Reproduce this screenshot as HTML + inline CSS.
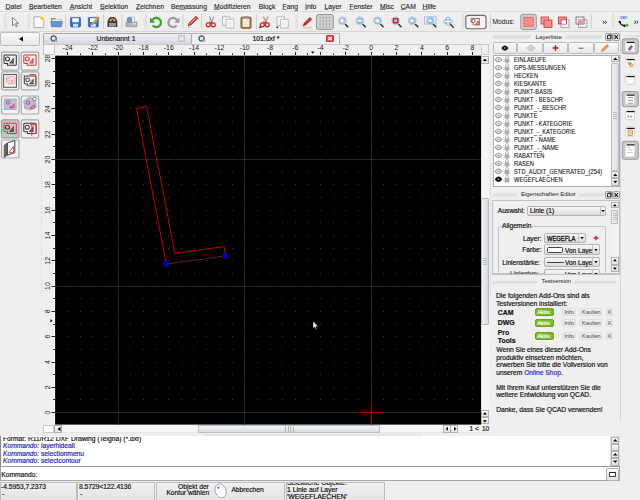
<!DOCTYPE html><html><head><meta charset="utf-8"><style>
*{margin:0;padding:0;box-sizing:border-box}
html,body{width:640px;height:500px;overflow:hidden;background:#efefef;font-family:"Liberation Sans",sans-serif;color:#111}
.a{position:absolute}
.t{position:absolute;white-space:nowrap;line-height:1;-webkit-text-stroke:0.18px currentColor}
#menu .t{font-size:6.8px;top:3.8px;color:#1a1a1a;-webkit-text-stroke:0.1px #1a1a1a}
#menu u{text-decoration-thickness:0.5px;text-underline-offset:0.4px;text-decoration-color:#888}
.btn{position:absolute;border:1px solid #bdbdbd;border-radius:2px;background:linear-gradient(#fbfbfb,#e6e6e6)}
.pr{position:absolute;border:1px solid #a0a0a0;border-radius:2px;background:#cdcdcd}
.sep{position:absolute;width:1px;background:#d0d0d0}
.grip{position:absolute;width:4px;background:repeating-linear-gradient(135deg,#c4c4c4 0 1px,transparent 1px 3px)}
</style></head><body>
<div id="menu" class="a" style="left:0;top:0;width:640px;height:12px;background:#efefef;border-bottom:1px solid #dadada">
<span class="t" style="left:5.6px"><u>D</u>atei</span>
<span class="t" style="left:29px"><u>B</u>earbeiten</span>
<span class="t" style="left:69.8px"><u>A</u>nsicht</span>
<span class="t" style="left:100px"><u>S</u>elektion</span>
<span class="t" style="left:136px"><u>Z</u>eichnen</span>
<span class="t" style="left:171px">Be<u>m</u>assung</span>
<span class="t" style="left:214px"><u>M</u>odifizieren</span>
<span class="t" style="left:258.7px">Blo<u>c</u>k</span>
<span class="t" style="left:282.5px"><u>F</u>ang</span>
<span class="t" style="left:305px"><u>I</u>nfo</span>
<span class="t" style="left:324.5px"><u>L</u>ayer</span>
<span class="t" style="left:349.5px"><u>F</u>enster</span>
<span class="t" style="left:380px"><u>M</u>isc</span>
<span class="t" style="left:400.7px"><u>C</u>AM</span>
<span class="t" style="left:422.5px"><u>H</u>ilfe</span>
</div>
<div id="tb" class="a" style="left:0;top:12px;width:640px;height:19.5px;background:linear-gradient(#f0f0f0,#ececec);border-bottom:1px solid #d6d6d6"></div>
<svg class="a" style="left:0;top:0" width="640" height="32"><g stroke="#c8c8c8" stroke-width="0.8"><path d="M4 16.4l2.6 -2.8"/><path d="M4 18.9l2.6 -2.8"/><path d="M4 21.4l2.6 -2.8"/><path d="M4 23.9l2.6 -2.8"/><path d="M4 26.4l2.6 -2.8"/><path d="M4 28.9l2.6 -2.8"/></g><g stroke="#c8c8c8" stroke-width="0.8"><path d="M27.3 16.4l2.6 -2.8"/><path d="M27.3 18.9l2.6 -2.8"/><path d="M27.3 21.4l2.6 -2.8"/><path d="M27.3 23.9l2.6 -2.8"/><path d="M27.3 26.4l2.6 -2.8"/><path d="M27.3 28.9l2.6 -2.8"/></g><g stroke="#c8c8c8" stroke-width="0.8"><path d="M144.5 16.4l2.6 -2.8"/><path d="M144.5 18.9l2.6 -2.8"/><path d="M144.5 21.4l2.6 -2.8"/><path d="M144.5 23.9l2.6 -2.8"/><path d="M144.5 26.4l2.6 -2.8"/><path d="M144.5 28.9l2.6 -2.8"/></g><g stroke="#c8c8c8" stroke-width="0.8"><path d="M295.5 16.4l2.6 -2.8"/><path d="M295.5 18.9l2.6 -2.8"/><path d="M295.5 21.4l2.6 -2.8"/><path d="M295.5 23.9l2.6 -2.8"/><path d="M295.5 26.4l2.6 -2.8"/><path d="M295.5 28.9l2.6 -2.8"/></g><g stroke="#c8c8c8" stroke-width="0.8"><path d="M462 16.4l2.6 -2.8"/><path d="M462 18.9l2.6 -2.8"/><path d="M462 21.4l2.6 -2.8"/><path d="M462 23.9l2.6 -2.8"/><path d="M462 26.4l2.6 -2.8"/><path d="M462 28.9l2.6 -2.8"/></g><g stroke="#c8c8c8" stroke-width="0.8"><path d="M611.8 16.4l2.6 -2.8"/><path d="M611.8 18.9l2.6 -2.8"/><path d="M611.8 21.4l2.6 -2.8"/><path d="M611.8 23.9l2.6 -2.8"/><path d="M611.8 26.4l2.6 -2.8"/><path d="M611.8 28.9l2.6 -2.8"/></g><rect x="65.3" y="14" width="0.9" height="15" fill="#cdcdcd"/><rect x="103" y="14" width="0.9" height="15" fill="#cdcdcd"/><rect x="121.6" y="14" width="0.9" height="15" fill="#cdcdcd"/><rect x="182.5" y="14" width="0.9" height="15" fill="#cdcdcd"/><rect x="201.3" y="14" width="0.9" height="15" fill="#cdcdcd"/><rect x="256" y="14" width="0.9" height="15" fill="#cdcdcd"/><rect x="490" y="14" width="0.9" height="15" fill="#cdcdcd"/><rect x="590.8" y="14" width="0.9" height="15" fill="#cdcdcd"/><path d="M12.5 17.5v8.2l2-1.8 1.6 3 1.2-.6-1.5-3h2.7z" fill="#fff" stroke="#555" stroke-width="0.7"/><path d="M34 16.8h7.5l2.2 2.2v8.6h-9.7z" fill="#fafafa" stroke="#9a9a9a" stroke-width="0.8"/><circle cx="42" cy="18.3" r="2" fill="#f6c20d" stroke="#fff" stroke-width="0.5"/><path d="M51 18h4l1 1.2h5.3v7.4h-10.3z" fill="#8e8e8e"/><path d="M52.2 19.5h8.4v2h-8.4z" fill="#f2f2f2"/><path d="M50.8 21.5h11.7l-1 5.3h-10z" fill="#6294d2" stroke="#3a6aa8" stroke-width="0.5"/><rect x="70.5" y="17.4" width="10" height="9.6" rx="1" fill="#2c6fd8" stroke="#1b4fa8" stroke-width="0.6"/><rect x="72.2" y="18.2" width="6.6" height="4" fill="#fff"/><rect x="73" y="23.8" width="5" height="3" fill="#d8e2f0"/><rect x="88.3" y="17.4" width="10" height="9.6" rx="1" fill="#2c6fd8" stroke="#1b4fa8" stroke-width="0.6"/><rect x="90" y="18.2" width="6.6" height="4" fill="#fff"/><rect x="90.8" y="23.8" width="5" height="3" fill="#d8e2f0"/><path d="M91.5 25l1-2.5 5.5-5.8 1.4 1.3-5.6 5.8z" fill="#f3b51c" stroke="#8a5a00" stroke-width="0.5"/><path d="M107.5 22.5c0-3.5 2-5.5 4.9-5.5s4.9 2 4.9 5.5v4.5h-9.8z" fill="#3a3a3a"/><path d="M109.5 20.5l3-2 3 2" stroke="#e8922a" stroke-width="1.2" fill="none"/><rect x="109" y="23" width="6.8" height="3.6" fill="#9a9a9a"/><rect x="110" y="19.8" width="1.5" height="1.5" fill="#f0b040"/><rect x="113.5" y="19.8" width="1.5" height="1.5" fill="#f0b040"/><path d="M126 22h11v4.8h-11z" fill="#b5b5b5" stroke="#8a8a8a" stroke-width="0.6"/><path d="M128 17h6.5v5h-6.5z" fill="#eee" stroke="#999" stroke-width="0.5"/><circle cx="129.5" cy="19.8" r="2.3" fill="#6a9be0" stroke="#2f5f9f" stroke-width="0.6"/><rect x="133" y="23.2" width="3" height="1.2" fill="#e6e6e6"/><path d="M152.6 19.8a4.6 4.6 0 1 1 .2 5.6" fill="none" stroke="#3aa02a" stroke-width="2.2"/><path d="M150 17.5v5.2h5.2z" fill="#3aa02a"/><path d="M176.8 19.8a4.6 4.6 0 1 0 -.2 5.6" fill="none" stroke="#9a9a9a" stroke-width="2.2"/><path d="M179.4 17.5v5.2h-5.2z" fill="#9a9a9a"/><path d="M188 26l1.2-3.2 6.8-6.6 2 2-6.8 6.6z" fill="#d42a2a" stroke="#9a1010" stroke-width="0.5"/><path d="M189.6 24l6.2-6" stroke="#fff" stroke-width="0.8"/><path d="M188 27.5h3" stroke="#bbb" stroke-width="0.8"/><path d="M209.5 16.5l2.5 6.5M214.0 16.5l-3 6.5" stroke="#9a9a9a" stroke-width="1.1"/><circle cx="208.3" cy="24.8" r="2" fill="none" stroke="#d42020" stroke-width="1.2"/><circle cx="213.3" cy="24.8" r="2" fill="none" stroke="#d42020" stroke-width="1.2"/><path d="M209.7 23.5l3-2M211.7 23.5l-2.6-2" stroke="#d42020" stroke-width="1"/><path d="M263.5 16.5l2.5 6.5M268.0 16.5l-3 6.5" stroke="#9a9a9a" stroke-width="1.1"/><circle cx="262.3" cy="24.8" r="2" fill="none" stroke="#d42020" stroke-width="1.2"/><circle cx="267.3" cy="24.8" r="2" fill="none" stroke="#d42020" stroke-width="1.2"/><path d="M263.7 23.5l3-2M265.7 23.5l-2.6-2" stroke="#d42020" stroke-width="1"/><rect x="259.2" y="26.5" width="1.6" height="1.6" fill="#222"/><rect x="222.5" y="16.8" width="7.5" height="8.5" fill="#f6f6f6" stroke="#a8a8a8" stroke-width="0.7"/><path d="M226.0 19.3h7.8v8.6h-7.8z" fill="#fbfbfb" stroke="#a8a8a8" stroke-width="0.7"/><path d="M227.5 22h4.5M227.5 23.6h4.5M227.5 25.2h4.5" stroke="#d8d8d8" stroke-width="0.6"/><rect x="277" y="16.8" width="7.5" height="8.5" fill="#f6f6f6" stroke="#a8a8a8" stroke-width="0.7"/><path d="M280.5 19.3h7.8v8.6h-7.8z" fill="#fbfbfb" stroke="#a8a8a8" stroke-width="0.7"/><path d="M282 22h4.5M282 23.6h4.5M282 25.2h4.5" stroke="#d8d8d8" stroke-width="0.6"/><rect x="276.5" y="26.5" width="1.6" height="1.6" fill="#222"/><rect x="241" y="17.2" width="10" height="11" rx="1" fill="#b67a3a" stroke="#8a5520"/><rect x="242.6" y="18.8" width="6.8" height="8" fill="#f4f4f4"/><rect x="243.8" y="16" width="4.4" height="2.4" rx="0.8" fill="#9a9a9a"/><path d="M243.6 21h4.8M243.6 22.8h4.8M243.6 24.6h4.8" stroke="#ccc" stroke-width="0.6"/><path d="M303 26l1.2-3 5.8-5.6 1.8 1.8-5.8 5.6z" fill="#d42a2a" stroke="#9a1010" stroke-width="0.5"/><path d="M302.5 27.8h8.8" stroke="#f2a0a0" stroke-width="1"/><rect x="316.5" y="14.5" width="16.8" height="15" rx="2" fill="#cfcfcf" stroke="#8e8e8e" stroke-width="0.9"/><g fill="#8a8a8a"><rect x="319.6" y="17.3" width="1.1" height="1.1"/><rect x="319.6" y="20.4" width="1.1" height="1.1"/><rect x="319.6" y="23.5" width="1.1" height="1.1"/><rect x="319.6" y="26.6" width="1.1" height="1.1"/><rect x="322.7" y="17.3" width="1.1" height="1.1"/><rect x="322.7" y="20.4" width="1.1" height="1.1"/><rect x="322.7" y="23.5" width="1.1" height="1.1"/><rect x="322.7" y="26.6" width="1.1" height="1.1"/><rect x="325.8" y="17.3" width="1.1" height="1.1"/><rect x="325.8" y="20.4" width="1.1" height="1.1"/><rect x="325.8" y="23.5" width="1.1" height="1.1"/><rect x="325.8" y="26.6" width="1.1" height="1.1"/><rect x="328.9" y="17.3" width="1.1" height="1.1"/><rect x="328.9" y="20.4" width="1.1" height="1.1"/><rect x="328.9" y="23.5" width="1.1" height="1.1"/><rect x="328.9" y="26.6" width="1.1" height="1.1"/></g><path d="M344.5 23.5l3.3 3.3" stroke="#333" stroke-width="1.6" stroke-linecap="round"/><circle cx="342.3" cy="20.8" r="4" fill="#8fb6e6" stroke="#c8d3df" stroke-width="1"/><circle cx="341.7" cy="20.2" r="2" fill="#b7d2f3"/><path d="M339.9 20.8h4.8M342.3 18.4v4.8" stroke="#fff" stroke-width="1.3"/><path d="M362.0 23.5l3.3 3.3" stroke="#333" stroke-width="1.6" stroke-linecap="round"/><circle cx="359.8" cy="20.8" r="4" fill="#8fb6e6" stroke="#c8d3df" stroke-width="1"/><circle cx="359.2" cy="20.2" r="2" fill="#b7d2f3"/><path d="M357.4 20.8h4.8" stroke="#fff" stroke-width="1.3"/><path d="M379.8 23.5l3.3 3.3" stroke="#333" stroke-width="1.6" stroke-linecap="round"/><circle cx="377.6" cy="20.8" r="4" fill="#8fb6e6" stroke="#c8d3df" stroke-width="1"/><circle cx="377.0" cy="20.2" r="2" fill="#b7d2f3"/><path d="M375.5 20.8h4.2M377.6 18.7v4.2" stroke="#fff" stroke-width="1.6"/><path d="M397.8 23.5l3.3 3.3" stroke="#333" stroke-width="1.6" stroke-linecap="round"/><circle cx="395.6" cy="20.8" r="4" fill="#8fb6e6" stroke="#c8d3df" stroke-width="1"/><circle cx="395.0" cy="20.2" r="2" fill="#b7d2f3"/><rect x="393.5" y="18.9" width="4.2" height="3.8" fill="none" stroke="#d41e1e" stroke-width="1.4"/><path d="M414.5 23.5l3.3 3.3" stroke="#333" stroke-width="1.6" stroke-linecap="round"/><circle cx="412.3" cy="20.8" r="4" fill="#8fb6e6" stroke="#c8d3df" stroke-width="1"/><circle cx="411.7" cy="20.2" r="2" fill="#b7d2f3"/><path d="M410.5 20.8h3.8M410.5 20.8l1.8-1.6M410.5 20.8l1.8 1.6" stroke="#fff" stroke-width="1.2"/><rect x="424.5" y="16.8" width="11.5" height="7.2" fill="#f6f8fb" stroke="#9ab4d6" stroke-width="0.8"/><path d="M432.5 23.5l3.3 3.3" stroke="#333" stroke-width="1.6" stroke-linecap="round"/><circle cx="430.3" cy="20.8" r="4" fill="#8fb6e6" stroke="#c8d3df" stroke-width="1"/><circle cx="429.7" cy="20.2" r="2" fill="#b7d2f3"/><path d="M428.2 20.8h4.2" stroke="#fff" stroke-width="1.2"/><path d="M448 16.2l5.2 5.2-5.2 5.2-5.2-5.2z" fill="#8fb6e6" stroke="#c6d4e6" stroke-width="0.6"/><path d="M448 17.5v7.8M444.1 21.4h7.8" stroke="#fff" stroke-width="1"/><path d="M450.6 24.5l2.6 2.8" stroke="#333" stroke-width="1.4" stroke-linecap="round"/><rect x="465.8" y="15.4" width="20.2" height="13.3" rx="2.5" fill="#f4f4f4" stroke="#6a6a6a" stroke-width="1.1"/><path d="M471 18.5h8.5v6.5h-6.5v-2.8h-2z" fill="none" stroke="#e23030" stroke-width="0.8"/><circle cx="473.4" cy="21" r="1.6" fill="#fff" stroke="#333" stroke-width="0.7"/><path d="M475.8 24.3l2.4-3.2v3.2z" fill="none" stroke="#333" stroke-width="0.7"/><text x="492.5" y="23.6" font-size="6.7" fill="#111" font-family="Liberation Sans">Modus:</text><rect x="520.8" y="14.3" width="15.5" height="15.2" rx="2" fill="#cdcdcd" stroke="#8e8e8e" stroke-width="0.9"/><rect x="523.8" y="17.4" width="9.5" height="9" fill="#ff8a8a" stroke="#c02020" stroke-width="0.7" stroke-dasharray="0.9 0.7"/><rect x="541" y="17" width="7.5" height="7" fill="#ff9a9a" stroke="#c02020" stroke-width="0.7"/><rect x="544" y="20" width="8" height="7.5" fill="#ff8a8a" stroke="#c02020" stroke-width="0.7"/><rect x="558.5" y="17" width="8" height="7" fill="#ff8a8a" stroke="#c02020" stroke-width="0.7"/><rect x="561" y="19.8" width="8" height="7.7" fill="none" stroke="#333" stroke-width="0.7" stroke-dasharray="0.9 0.8"/><rect x="561.6" y="20.4" width="4.4" height="3.5" fill="#fff"/><rect x="576" y="17" width="8" height="7" fill="none" stroke="#555" stroke-width="0.7"/><rect x="578.5" y="19.8" width="8.5" height="7.7" fill="none" stroke="#333" stroke-width="0.7" stroke-dasharray="0.9 0.8"/><rect x="578.9" y="20.2" width="4.7" height="3.9" fill="#ff8a8a"/><path d="M603 21l1.5 1.3-1.5 1.3M605.2 21l1.5 1.3-1.5 1.3" fill="none" stroke="#111" stroke-width="0.9"/><path d="M634.4 21l1.5 1.3-1.5 1.3M636.6 21l1.5 1.3-1.5 1.3" fill="none" stroke="#111" stroke-width="0.9"/><text x="620.3" y="19.3" font-size="3.3" fill="#4a6ae8" font-family="Liberation Sans" font-weight="bold">DBX</text><path d="M619.8 21.9l1.4 2.6 3.2 1.3" fill="none" stroke="#111" stroke-width="1.3"/><circle cx="619.8" cy="21.9" r="1.2" fill="#111"/><circle cx="624.5" cy="25.8" r="1.2" fill="#111"/><path d="M625.3 25.1h3.2M627 23.8v2.8" stroke="#22a022" stroke-width="1.1"/></svg>
<svg class="a" style="left:0;top:0" width="640" height="500"><rect x="55" y="55.4" width="426" height="369.20000000000005" fill="#000"/><line x1="118.5" y1="55.4" x2="118.5" y2="424.6" stroke="#242424" stroke-width="1"/><line x1="244.5" y1="55.4" x2="244.5" y2="424.6" stroke="#242424" stroke-width="1"/><line x1="371.5" y1="55.4" x2="371.5" y2="424.6" stroke="#242424" stroke-width="1"/><line x1="55" y1="412.5" x2="481" y2="412.5" stroke="#242424" stroke-width="1"/><line x1="55" y1="286.5" x2="481" y2="286.5" stroke="#242424" stroke-width="1"/><line x1="55" y1="159.5" x2="481" y2="159.5" stroke="#242424" stroke-width="1"/><path d="M67 412h1v1h-1zM67 399h1v1h-1zM67 387h1v1h-1zM67 374h1v1h-1zM67 362h1v1h-1zM67 349h1v1h-1zM67 336h1v1h-1zM67 324h1v1h-1zM67 311h1v1h-1zM67 298h1v1h-1zM67 286h1v1h-1zM67 273h1v1h-1zM67 260h1v1h-1zM67 248h1v1h-1zM67 235h1v1h-1zM67 222h1v1h-1zM67 210h1v1h-1zM67 197h1v1h-1zM67 184h1v1h-1zM67 172h1v1h-1zM67 159h1v1h-1zM67 146h1v1h-1zM67 134h1v1h-1zM67 121h1v1h-1zM67 108h1v1h-1zM67 96h1v1h-1zM67 83h1v1h-1zM67 71h1v1h-1zM67 58h1v1h-1zM80 412h1v1h-1zM80 399h1v1h-1zM80 387h1v1h-1zM80 374h1v1h-1zM80 362h1v1h-1zM80 349h1v1h-1zM80 336h1v1h-1zM80 324h1v1h-1zM80 311h1v1h-1zM80 298h1v1h-1zM80 286h1v1h-1zM80 273h1v1h-1zM80 260h1v1h-1zM80 248h1v1h-1zM80 235h1v1h-1zM80 222h1v1h-1zM80 210h1v1h-1zM80 197h1v1h-1zM80 184h1v1h-1zM80 172h1v1h-1zM80 159h1v1h-1zM80 146h1v1h-1zM80 134h1v1h-1zM80 121h1v1h-1zM80 108h1v1h-1zM80 96h1v1h-1zM80 83h1v1h-1zM80 71h1v1h-1zM80 58h1v1h-1zM92 412h1v1h-1zM92 399h1v1h-1zM92 387h1v1h-1zM92 374h1v1h-1zM92 362h1v1h-1zM92 349h1v1h-1zM92 336h1v1h-1zM92 324h1v1h-1zM92 311h1v1h-1zM92 298h1v1h-1zM92 286h1v1h-1zM92 273h1v1h-1zM92 260h1v1h-1zM92 248h1v1h-1zM92 235h1v1h-1zM92 222h1v1h-1zM92 210h1v1h-1zM92 197h1v1h-1zM92 184h1v1h-1zM92 172h1v1h-1zM92 159h1v1h-1zM92 146h1v1h-1zM92 134h1v1h-1zM92 121h1v1h-1zM92 108h1v1h-1zM92 96h1v1h-1zM92 83h1v1h-1zM92 71h1v1h-1zM92 58h1v1h-1zM105 412h1v1h-1zM105 399h1v1h-1zM105 387h1v1h-1zM105 374h1v1h-1zM105 362h1v1h-1zM105 349h1v1h-1zM105 336h1v1h-1zM105 324h1v1h-1zM105 311h1v1h-1zM105 298h1v1h-1zM105 286h1v1h-1zM105 273h1v1h-1zM105 260h1v1h-1zM105 248h1v1h-1zM105 235h1v1h-1zM105 222h1v1h-1zM105 210h1v1h-1zM105 197h1v1h-1zM105 184h1v1h-1zM105 172h1v1h-1zM105 159h1v1h-1zM105 146h1v1h-1zM105 134h1v1h-1zM105 121h1v1h-1zM105 108h1v1h-1zM105 96h1v1h-1zM105 83h1v1h-1zM105 71h1v1h-1zM105 58h1v1h-1zM118 412h1v1h-1zM118 399h1v1h-1zM118 387h1v1h-1zM118 374h1v1h-1zM118 362h1v1h-1zM118 349h1v1h-1zM118 336h1v1h-1zM118 324h1v1h-1zM118 311h1v1h-1zM118 298h1v1h-1zM118 286h1v1h-1zM118 273h1v1h-1zM118 260h1v1h-1zM118 248h1v1h-1zM118 235h1v1h-1zM118 222h1v1h-1zM118 210h1v1h-1zM118 197h1v1h-1zM118 184h1v1h-1zM118 172h1v1h-1zM118 159h1v1h-1zM118 146h1v1h-1zM118 134h1v1h-1zM118 121h1v1h-1zM118 108h1v1h-1zM118 96h1v1h-1zM118 83h1v1h-1zM118 71h1v1h-1zM118 58h1v1h-1zM130 412h1v1h-1zM130 399h1v1h-1zM130 387h1v1h-1zM130 374h1v1h-1zM130 362h1v1h-1zM130 349h1v1h-1zM130 336h1v1h-1zM130 324h1v1h-1zM130 311h1v1h-1zM130 298h1v1h-1zM130 286h1v1h-1zM130 273h1v1h-1zM130 260h1v1h-1zM130 248h1v1h-1zM130 235h1v1h-1zM130 222h1v1h-1zM130 210h1v1h-1zM130 197h1v1h-1zM130 184h1v1h-1zM130 172h1v1h-1zM130 159h1v1h-1zM130 146h1v1h-1zM130 134h1v1h-1zM130 121h1v1h-1zM130 108h1v1h-1zM130 96h1v1h-1zM130 83h1v1h-1zM130 71h1v1h-1zM130 58h1v1h-1zM143 412h1v1h-1zM143 399h1v1h-1zM143 387h1v1h-1zM143 374h1v1h-1zM143 362h1v1h-1zM143 349h1v1h-1zM143 336h1v1h-1zM143 324h1v1h-1zM143 311h1v1h-1zM143 298h1v1h-1zM143 286h1v1h-1zM143 273h1v1h-1zM143 260h1v1h-1zM143 248h1v1h-1zM143 235h1v1h-1zM143 222h1v1h-1zM143 210h1v1h-1zM143 197h1v1h-1zM143 184h1v1h-1zM143 172h1v1h-1zM143 159h1v1h-1zM143 146h1v1h-1zM143 134h1v1h-1zM143 121h1v1h-1zM143 108h1v1h-1zM143 96h1v1h-1zM143 83h1v1h-1zM143 71h1v1h-1zM143 58h1v1h-1zM156 412h1v1h-1zM156 399h1v1h-1zM156 387h1v1h-1zM156 374h1v1h-1zM156 362h1v1h-1zM156 349h1v1h-1zM156 336h1v1h-1zM156 324h1v1h-1zM156 311h1v1h-1zM156 298h1v1h-1zM156 286h1v1h-1zM156 273h1v1h-1zM156 260h1v1h-1zM156 248h1v1h-1zM156 235h1v1h-1zM156 222h1v1h-1zM156 210h1v1h-1zM156 197h1v1h-1zM156 184h1v1h-1zM156 172h1v1h-1zM156 159h1v1h-1zM156 146h1v1h-1zM156 134h1v1h-1zM156 121h1v1h-1zM156 108h1v1h-1zM156 96h1v1h-1zM156 83h1v1h-1zM156 71h1v1h-1zM156 58h1v1h-1zM168 412h1v1h-1zM168 399h1v1h-1zM168 387h1v1h-1zM168 374h1v1h-1zM168 362h1v1h-1zM168 349h1v1h-1zM168 336h1v1h-1zM168 324h1v1h-1zM168 311h1v1h-1zM168 298h1v1h-1zM168 286h1v1h-1zM168 273h1v1h-1zM168 260h1v1h-1zM168 248h1v1h-1zM168 235h1v1h-1zM168 222h1v1h-1zM168 210h1v1h-1zM168 197h1v1h-1zM168 184h1v1h-1zM168 172h1v1h-1zM168 159h1v1h-1zM168 146h1v1h-1zM168 134h1v1h-1zM168 121h1v1h-1zM168 108h1v1h-1zM168 96h1v1h-1zM168 83h1v1h-1zM168 71h1v1h-1zM168 58h1v1h-1zM181 412h1v1h-1zM181 399h1v1h-1zM181 387h1v1h-1zM181 374h1v1h-1zM181 362h1v1h-1zM181 349h1v1h-1zM181 336h1v1h-1zM181 324h1v1h-1zM181 311h1v1h-1zM181 298h1v1h-1zM181 286h1v1h-1zM181 273h1v1h-1zM181 260h1v1h-1zM181 248h1v1h-1zM181 235h1v1h-1zM181 222h1v1h-1zM181 210h1v1h-1zM181 197h1v1h-1zM181 184h1v1h-1zM181 172h1v1h-1zM181 159h1v1h-1zM181 146h1v1h-1zM181 134h1v1h-1zM181 121h1v1h-1zM181 108h1v1h-1zM181 96h1v1h-1zM181 83h1v1h-1zM181 71h1v1h-1zM181 58h1v1h-1zM194 412h1v1h-1zM194 399h1v1h-1zM194 387h1v1h-1zM194 374h1v1h-1zM194 362h1v1h-1zM194 349h1v1h-1zM194 336h1v1h-1zM194 324h1v1h-1zM194 311h1v1h-1zM194 298h1v1h-1zM194 286h1v1h-1zM194 273h1v1h-1zM194 260h1v1h-1zM194 248h1v1h-1zM194 235h1v1h-1zM194 222h1v1h-1zM194 210h1v1h-1zM194 197h1v1h-1zM194 184h1v1h-1zM194 172h1v1h-1zM194 159h1v1h-1zM194 146h1v1h-1zM194 134h1v1h-1zM194 121h1v1h-1zM194 108h1v1h-1zM194 96h1v1h-1zM194 83h1v1h-1zM194 71h1v1h-1zM194 58h1v1h-1zM206 412h1v1h-1zM206 399h1v1h-1zM206 387h1v1h-1zM206 374h1v1h-1zM206 362h1v1h-1zM206 349h1v1h-1zM206 336h1v1h-1zM206 324h1v1h-1zM206 311h1v1h-1zM206 298h1v1h-1zM206 286h1v1h-1zM206 273h1v1h-1zM206 260h1v1h-1zM206 248h1v1h-1zM206 235h1v1h-1zM206 222h1v1h-1zM206 210h1v1h-1zM206 197h1v1h-1zM206 184h1v1h-1zM206 172h1v1h-1zM206 159h1v1h-1zM206 146h1v1h-1zM206 134h1v1h-1zM206 121h1v1h-1zM206 108h1v1h-1zM206 96h1v1h-1zM206 83h1v1h-1zM206 71h1v1h-1zM206 58h1v1h-1zM219 412h1v1h-1zM219 399h1v1h-1zM219 387h1v1h-1zM219 374h1v1h-1zM219 362h1v1h-1zM219 349h1v1h-1zM219 336h1v1h-1zM219 324h1v1h-1zM219 311h1v1h-1zM219 298h1v1h-1zM219 286h1v1h-1zM219 273h1v1h-1zM219 260h1v1h-1zM219 248h1v1h-1zM219 235h1v1h-1zM219 222h1v1h-1zM219 210h1v1h-1zM219 197h1v1h-1zM219 184h1v1h-1zM219 172h1v1h-1zM219 159h1v1h-1zM219 146h1v1h-1zM219 134h1v1h-1zM219 121h1v1h-1zM219 108h1v1h-1zM219 96h1v1h-1zM219 83h1v1h-1zM219 71h1v1h-1zM219 58h1v1h-1zM232 412h1v1h-1zM232 399h1v1h-1zM232 387h1v1h-1zM232 374h1v1h-1zM232 362h1v1h-1zM232 349h1v1h-1zM232 336h1v1h-1zM232 324h1v1h-1zM232 311h1v1h-1zM232 298h1v1h-1zM232 286h1v1h-1zM232 273h1v1h-1zM232 260h1v1h-1zM232 248h1v1h-1zM232 235h1v1h-1zM232 222h1v1h-1zM232 210h1v1h-1zM232 197h1v1h-1zM232 184h1v1h-1zM232 172h1v1h-1zM232 159h1v1h-1zM232 146h1v1h-1zM232 134h1v1h-1zM232 121h1v1h-1zM232 108h1v1h-1zM232 96h1v1h-1zM232 83h1v1h-1zM232 71h1v1h-1zM232 58h1v1h-1zM244 412h1v1h-1zM244 399h1v1h-1zM244 387h1v1h-1zM244 374h1v1h-1zM244 362h1v1h-1zM244 349h1v1h-1zM244 336h1v1h-1zM244 324h1v1h-1zM244 311h1v1h-1zM244 298h1v1h-1zM244 286h1v1h-1zM244 273h1v1h-1zM244 260h1v1h-1zM244 248h1v1h-1zM244 235h1v1h-1zM244 222h1v1h-1zM244 210h1v1h-1zM244 197h1v1h-1zM244 184h1v1h-1zM244 172h1v1h-1zM244 159h1v1h-1zM244 146h1v1h-1zM244 134h1v1h-1zM244 121h1v1h-1zM244 108h1v1h-1zM244 96h1v1h-1zM244 83h1v1h-1zM244 71h1v1h-1zM244 58h1v1h-1zM257 412h1v1h-1zM257 399h1v1h-1zM257 387h1v1h-1zM257 374h1v1h-1zM257 362h1v1h-1zM257 349h1v1h-1zM257 336h1v1h-1zM257 324h1v1h-1zM257 311h1v1h-1zM257 298h1v1h-1zM257 286h1v1h-1zM257 273h1v1h-1zM257 260h1v1h-1zM257 248h1v1h-1zM257 235h1v1h-1zM257 222h1v1h-1zM257 210h1v1h-1zM257 197h1v1h-1zM257 184h1v1h-1zM257 172h1v1h-1zM257 159h1v1h-1zM257 146h1v1h-1zM257 134h1v1h-1zM257 121h1v1h-1zM257 108h1v1h-1zM257 96h1v1h-1zM257 83h1v1h-1zM257 71h1v1h-1zM257 58h1v1h-1zM270 412h1v1h-1zM270 399h1v1h-1zM270 387h1v1h-1zM270 374h1v1h-1zM270 362h1v1h-1zM270 349h1v1h-1zM270 336h1v1h-1zM270 324h1v1h-1zM270 311h1v1h-1zM270 298h1v1h-1zM270 286h1v1h-1zM270 273h1v1h-1zM270 260h1v1h-1zM270 248h1v1h-1zM270 235h1v1h-1zM270 222h1v1h-1zM270 210h1v1h-1zM270 197h1v1h-1zM270 184h1v1h-1zM270 172h1v1h-1zM270 159h1v1h-1zM270 146h1v1h-1zM270 134h1v1h-1zM270 121h1v1h-1zM270 108h1v1h-1zM270 96h1v1h-1zM270 83h1v1h-1zM270 71h1v1h-1zM270 58h1v1h-1zM282 412h1v1h-1zM282 399h1v1h-1zM282 387h1v1h-1zM282 374h1v1h-1zM282 362h1v1h-1zM282 349h1v1h-1zM282 336h1v1h-1zM282 324h1v1h-1zM282 311h1v1h-1zM282 298h1v1h-1zM282 286h1v1h-1zM282 273h1v1h-1zM282 260h1v1h-1zM282 248h1v1h-1zM282 235h1v1h-1zM282 222h1v1h-1zM282 210h1v1h-1zM282 197h1v1h-1zM282 184h1v1h-1zM282 172h1v1h-1zM282 159h1v1h-1zM282 146h1v1h-1zM282 134h1v1h-1zM282 121h1v1h-1zM282 108h1v1h-1zM282 96h1v1h-1zM282 83h1v1h-1zM282 71h1v1h-1zM282 58h1v1h-1zM295 412h1v1h-1zM295 399h1v1h-1zM295 387h1v1h-1zM295 374h1v1h-1zM295 362h1v1h-1zM295 349h1v1h-1zM295 336h1v1h-1zM295 324h1v1h-1zM295 311h1v1h-1zM295 298h1v1h-1zM295 286h1v1h-1zM295 273h1v1h-1zM295 260h1v1h-1zM295 248h1v1h-1zM295 235h1v1h-1zM295 222h1v1h-1zM295 210h1v1h-1zM295 197h1v1h-1zM295 184h1v1h-1zM295 172h1v1h-1zM295 159h1v1h-1zM295 146h1v1h-1zM295 134h1v1h-1zM295 121h1v1h-1zM295 108h1v1h-1zM295 96h1v1h-1zM295 83h1v1h-1zM295 71h1v1h-1zM295 58h1v1h-1zM307 412h1v1h-1zM307 399h1v1h-1zM307 387h1v1h-1zM307 374h1v1h-1zM307 362h1v1h-1zM307 349h1v1h-1zM307 336h1v1h-1zM307 324h1v1h-1zM307 311h1v1h-1zM307 298h1v1h-1zM307 286h1v1h-1zM307 273h1v1h-1zM307 260h1v1h-1zM307 248h1v1h-1zM307 235h1v1h-1zM307 222h1v1h-1zM307 210h1v1h-1zM307 197h1v1h-1zM307 184h1v1h-1zM307 172h1v1h-1zM307 159h1v1h-1zM307 146h1v1h-1zM307 134h1v1h-1zM307 121h1v1h-1zM307 108h1v1h-1zM307 96h1v1h-1zM307 83h1v1h-1zM307 71h1v1h-1zM307 58h1v1h-1zM320 412h1v1h-1zM320 399h1v1h-1zM320 387h1v1h-1zM320 374h1v1h-1zM320 362h1v1h-1zM320 349h1v1h-1zM320 336h1v1h-1zM320 324h1v1h-1zM320 311h1v1h-1zM320 298h1v1h-1zM320 286h1v1h-1zM320 273h1v1h-1zM320 260h1v1h-1zM320 248h1v1h-1zM320 235h1v1h-1zM320 222h1v1h-1zM320 210h1v1h-1zM320 197h1v1h-1zM320 184h1v1h-1zM320 172h1v1h-1zM320 159h1v1h-1zM320 146h1v1h-1zM320 134h1v1h-1zM320 121h1v1h-1zM320 108h1v1h-1zM320 96h1v1h-1zM320 83h1v1h-1zM320 71h1v1h-1zM320 58h1v1h-1zM333 412h1v1h-1zM333 399h1v1h-1zM333 387h1v1h-1zM333 374h1v1h-1zM333 362h1v1h-1zM333 349h1v1h-1zM333 336h1v1h-1zM333 324h1v1h-1zM333 311h1v1h-1zM333 298h1v1h-1zM333 286h1v1h-1zM333 273h1v1h-1zM333 260h1v1h-1zM333 248h1v1h-1zM333 235h1v1h-1zM333 222h1v1h-1zM333 210h1v1h-1zM333 197h1v1h-1zM333 184h1v1h-1zM333 172h1v1h-1zM333 159h1v1h-1zM333 146h1v1h-1zM333 134h1v1h-1zM333 121h1v1h-1zM333 108h1v1h-1zM333 96h1v1h-1zM333 83h1v1h-1zM333 71h1v1h-1zM333 58h1v1h-1zM345 412h1v1h-1zM345 399h1v1h-1zM345 387h1v1h-1zM345 374h1v1h-1zM345 362h1v1h-1zM345 349h1v1h-1zM345 336h1v1h-1zM345 324h1v1h-1zM345 311h1v1h-1zM345 298h1v1h-1zM345 286h1v1h-1zM345 273h1v1h-1zM345 260h1v1h-1zM345 248h1v1h-1zM345 235h1v1h-1zM345 222h1v1h-1zM345 210h1v1h-1zM345 197h1v1h-1zM345 184h1v1h-1zM345 172h1v1h-1zM345 159h1v1h-1zM345 146h1v1h-1zM345 134h1v1h-1zM345 121h1v1h-1zM345 108h1v1h-1zM345 96h1v1h-1zM345 83h1v1h-1zM345 71h1v1h-1zM345 58h1v1h-1zM358 412h1v1h-1zM358 399h1v1h-1zM358 387h1v1h-1zM358 374h1v1h-1zM358 362h1v1h-1zM358 349h1v1h-1zM358 336h1v1h-1zM358 324h1v1h-1zM358 311h1v1h-1zM358 298h1v1h-1zM358 286h1v1h-1zM358 273h1v1h-1zM358 260h1v1h-1zM358 248h1v1h-1zM358 235h1v1h-1zM358 222h1v1h-1zM358 210h1v1h-1zM358 197h1v1h-1zM358 184h1v1h-1zM358 172h1v1h-1zM358 159h1v1h-1zM358 146h1v1h-1zM358 134h1v1h-1zM358 121h1v1h-1zM358 108h1v1h-1zM358 96h1v1h-1zM358 83h1v1h-1zM358 71h1v1h-1zM358 58h1v1h-1zM371 412h1v1h-1zM371 399h1v1h-1zM371 387h1v1h-1zM371 374h1v1h-1zM371 362h1v1h-1zM371 349h1v1h-1zM371 336h1v1h-1zM371 324h1v1h-1zM371 311h1v1h-1zM371 298h1v1h-1zM371 286h1v1h-1zM371 273h1v1h-1zM371 260h1v1h-1zM371 248h1v1h-1zM371 235h1v1h-1zM371 222h1v1h-1zM371 210h1v1h-1zM371 197h1v1h-1zM371 184h1v1h-1zM371 172h1v1h-1zM371 159h1v1h-1zM371 146h1v1h-1zM371 134h1v1h-1zM371 121h1v1h-1zM371 108h1v1h-1zM371 96h1v1h-1zM371 83h1v1h-1zM371 71h1v1h-1zM371 58h1v1h-1zM383 412h1v1h-1zM383 399h1v1h-1zM383 387h1v1h-1zM383 374h1v1h-1zM383 362h1v1h-1zM383 349h1v1h-1zM383 336h1v1h-1zM383 324h1v1h-1zM383 311h1v1h-1zM383 298h1v1h-1zM383 286h1v1h-1zM383 273h1v1h-1zM383 260h1v1h-1zM383 248h1v1h-1zM383 235h1v1h-1zM383 222h1v1h-1zM383 210h1v1h-1zM383 197h1v1h-1zM383 184h1v1h-1zM383 172h1v1h-1zM383 159h1v1h-1zM383 146h1v1h-1zM383 134h1v1h-1zM383 121h1v1h-1zM383 108h1v1h-1zM383 96h1v1h-1zM383 83h1v1h-1zM383 71h1v1h-1zM383 58h1v1h-1zM396 412h1v1h-1zM396 399h1v1h-1zM396 387h1v1h-1zM396 374h1v1h-1zM396 362h1v1h-1zM396 349h1v1h-1zM396 336h1v1h-1zM396 324h1v1h-1zM396 311h1v1h-1zM396 298h1v1h-1zM396 286h1v1h-1zM396 273h1v1h-1zM396 260h1v1h-1zM396 248h1v1h-1zM396 235h1v1h-1zM396 222h1v1h-1zM396 210h1v1h-1zM396 197h1v1h-1zM396 184h1v1h-1zM396 172h1v1h-1zM396 159h1v1h-1zM396 146h1v1h-1zM396 134h1v1h-1zM396 121h1v1h-1zM396 108h1v1h-1zM396 96h1v1h-1zM396 83h1v1h-1zM396 71h1v1h-1zM396 58h1v1h-1zM409 412h1v1h-1zM409 399h1v1h-1zM409 387h1v1h-1zM409 374h1v1h-1zM409 362h1v1h-1zM409 349h1v1h-1zM409 336h1v1h-1zM409 324h1v1h-1zM409 311h1v1h-1zM409 298h1v1h-1zM409 286h1v1h-1zM409 273h1v1h-1zM409 260h1v1h-1zM409 248h1v1h-1zM409 235h1v1h-1zM409 222h1v1h-1zM409 210h1v1h-1zM409 197h1v1h-1zM409 184h1v1h-1zM409 172h1v1h-1zM409 159h1v1h-1zM409 146h1v1h-1zM409 134h1v1h-1zM409 121h1v1h-1zM409 108h1v1h-1zM409 96h1v1h-1zM409 83h1v1h-1zM409 71h1v1h-1zM409 58h1v1h-1zM421 412h1v1h-1zM421 399h1v1h-1zM421 387h1v1h-1zM421 374h1v1h-1zM421 362h1v1h-1zM421 349h1v1h-1zM421 336h1v1h-1zM421 324h1v1h-1zM421 311h1v1h-1zM421 298h1v1h-1zM421 286h1v1h-1zM421 273h1v1h-1zM421 260h1v1h-1zM421 248h1v1h-1zM421 235h1v1h-1zM421 222h1v1h-1zM421 210h1v1h-1zM421 197h1v1h-1zM421 184h1v1h-1zM421 172h1v1h-1zM421 159h1v1h-1zM421 146h1v1h-1zM421 134h1v1h-1zM421 121h1v1h-1zM421 108h1v1h-1zM421 96h1v1h-1zM421 83h1v1h-1zM421 71h1v1h-1zM421 58h1v1h-1zM434 412h1v1h-1zM434 399h1v1h-1zM434 387h1v1h-1zM434 374h1v1h-1zM434 362h1v1h-1zM434 349h1v1h-1zM434 336h1v1h-1zM434 324h1v1h-1zM434 311h1v1h-1zM434 298h1v1h-1zM434 286h1v1h-1zM434 273h1v1h-1zM434 260h1v1h-1zM434 248h1v1h-1zM434 235h1v1h-1zM434 222h1v1h-1zM434 210h1v1h-1zM434 197h1v1h-1zM434 184h1v1h-1zM434 172h1v1h-1zM434 159h1v1h-1zM434 146h1v1h-1zM434 134h1v1h-1zM434 121h1v1h-1zM434 108h1v1h-1zM434 96h1v1h-1zM434 83h1v1h-1zM434 71h1v1h-1zM434 58h1v1h-1zM447 412h1v1h-1zM447 399h1v1h-1zM447 387h1v1h-1zM447 374h1v1h-1zM447 362h1v1h-1zM447 349h1v1h-1zM447 336h1v1h-1zM447 324h1v1h-1zM447 311h1v1h-1zM447 298h1v1h-1zM447 286h1v1h-1zM447 273h1v1h-1zM447 260h1v1h-1zM447 248h1v1h-1zM447 235h1v1h-1zM447 222h1v1h-1zM447 210h1v1h-1zM447 197h1v1h-1zM447 184h1v1h-1zM447 172h1v1h-1zM447 159h1v1h-1zM447 146h1v1h-1zM447 134h1v1h-1zM447 121h1v1h-1zM447 108h1v1h-1zM447 96h1v1h-1zM447 83h1v1h-1zM447 71h1v1h-1zM447 58h1v1h-1zM459 412h1v1h-1zM459 399h1v1h-1zM459 387h1v1h-1zM459 374h1v1h-1zM459 362h1v1h-1zM459 349h1v1h-1zM459 336h1v1h-1zM459 324h1v1h-1zM459 311h1v1h-1zM459 298h1v1h-1zM459 286h1v1h-1zM459 273h1v1h-1zM459 260h1v1h-1zM459 248h1v1h-1zM459 235h1v1h-1zM459 222h1v1h-1zM459 210h1v1h-1zM459 197h1v1h-1zM459 184h1v1h-1zM459 172h1v1h-1zM459 159h1v1h-1zM459 146h1v1h-1zM459 134h1v1h-1zM459 121h1v1h-1zM459 108h1v1h-1zM459 96h1v1h-1zM459 83h1v1h-1zM459 71h1v1h-1zM459 58h1v1h-1zM472 412h1v1h-1zM472 399h1v1h-1zM472 387h1v1h-1zM472 374h1v1h-1zM472 362h1v1h-1zM472 349h1v1h-1zM472 336h1v1h-1zM472 324h1v1h-1zM472 311h1v1h-1zM472 298h1v1h-1zM472 286h1v1h-1zM472 273h1v1h-1zM472 260h1v1h-1zM472 248h1v1h-1zM472 235h1v1h-1zM472 222h1v1h-1zM472 210h1v1h-1zM472 197h1v1h-1zM472 184h1v1h-1zM472 172h1v1h-1zM472 159h1v1h-1zM472 146h1v1h-1zM472 134h1v1h-1zM472 121h1v1h-1zM472 108h1v1h-1zM472 96h1v1h-1zM472 83h1v1h-1zM472 71h1v1h-1zM472 58h1v1h-1z" fill="#404040"/><line x1="371.5" y1="402" x2="371.5" y2="424.6" stroke="#b40000" stroke-width="1"/><line x1="361" y1="412.5" x2="382" y2="412.5" stroke="#b40000" stroke-width="1"/><polyline points="166,262.5 136.5,108.5 146.5,106.3 175,253.4 224.1,246.6 225.4,256" fill="none" stroke="#c40000" stroke-width="1"/><line x1="166" y1="264" x2="225.4" y2="256" stroke="#5a2214" stroke-width="1"/><rect x="163.5" y="261.5" width="5" height="5" fill="#0000d0"/><rect x="222.9" y="253.5" width="5" height="5" fill="#0000d0"/><path d="M313 321v7.6l1.7-1.6 1.3 2.8 1-.5-1.3-2.7h2.4z" fill="#fff" stroke="#000" stroke-width="0.5"/></svg>
<div class="btn" style="left:0;top:31.5px;width:40px;height:14.5px;border-radius:2px"></div>
<svg class="a" style="left:18px;top:36px" width="6" height="6"><path d="M5 0.5V5.5L1 3z" fill="#000"/></svg>
<div class="a" style="left:43px;top:33px;width:148.5px;height:11px;border:1px solid #a9a9a9;border-bottom:none;border-radius:2px 2px 0 0;background:linear-gradient(#efefef,#d3d8df)"></div>
<div class="a" style="left:191.5px;top:33px;width:148px;height:11px;border-top:1px solid #b5b5b5;border-right:1px solid #b5b5b5;background:#f0f0f0"></div>
<span class="t" style="left:96.5px;top:35.6px;font-size:6.8px;color:#222">Unbenannt 1</span>
<span class="t" style="left:252.5px;top:35.6px;font-size:6.8px;color:#111">101.dxf *</span>
<svg class="a" style="left:50px;top:35px" width="8" height="7"><circle cx="3.6" cy="3.4" r="2.6" fill="#dfe9f5" stroke="#2a4f8a" stroke-width="1.2"/><path d="M4.6 4.2l2.4 2.2" stroke="#e0902a" stroke-width="1.3"/></svg>
<svg class="a" style="left:198px;top:35px" width="8" height="7"><circle cx="3.6" cy="3.4" r="2.6" fill="#dfe9f5" stroke="#2a4f8a" stroke-width="1.2"/><path d="M4.6 4.2l2.4 2.2" stroke="#e0902a" stroke-width="1.3"/></svg>
<div class="a" style="left:177.5px;top:35px;width:7px;height:6.5px;border-radius:1px;background:#d5d5d5;border:1px solid #c2c2c2"></div>
<svg class="a" style="left:177.5px;top:35px" width="7" height="7"><path d="M2 2L5 5M5 2L2 5" stroke="#fff" stroke-width="1"/></svg>
<div class="a" style="left:326px;top:35px;width:8px;height:6.5px;border-radius:1px;background:#e05050;border:1px solid #c53030"></div>
<svg class="a" style="left:326px;top:35px" width="8" height="7"><path d="M2.3 1.8L5.7 5.2M5.7 1.8L2.3 5.2" stroke="#fff" stroke-width="1.2"/></svg>
<div class="a" style="left:43px;top:43.5px;width:438px;height:11.5px;background:#efefef;border-top:1px solid #c9c9c9"></div>
<div class="a" style="left:43px;top:43.5px;width:11.5px;height:381px;background:#efefef"></div>
<div class="a" style="left:40.6px;top:168px;width:1px;height:128px;background:repeating-linear-gradient(#d2d2d2 0 1px,transparent 1px 2.5px)"></div>
<div class="a" style="left:43px;top:43.5px;width:11.5px;height:11.5px;background:#f7f7f7;border:1px solid #c6c6c6"></div>
<div class="a" style="left:481px;top:43.5px;width:8px;height:11.5px;background:#f0f0f0;border:1px solid #cfcfcf"></div>
<svg class="a" style="left:0;top:0" width="640" height="500"><defs><clipPath id="vclip"><rect x="43" y="55.2" width="12" height="370"/></clipPath></defs><rect x="54.5" y="54.3" width="426.5" height="1.1" fill="#fff"/><rect x="54" y="55" width="1.1" height="369.2" fill="#fff"/><text x="67.6" y="50" font-size="6.9" text-anchor="middle" fill="#1a1a1a" font-family="Liberation Sans">-24</text><text x="92.9" y="50" font-size="6.9" text-anchor="middle" fill="#1a1a1a" font-family="Liberation Sans">-22</text><text x="118.2" y="50" font-size="6.9" text-anchor="middle" fill="#1a1a1a" font-family="Liberation Sans">-20</text><text x="143.5" y="50" font-size="6.9" text-anchor="middle" fill="#1a1a1a" font-family="Liberation Sans">-18</text><text x="168.8" y="50" font-size="6.9" text-anchor="middle" fill="#1a1a1a" font-family="Liberation Sans">-16</text><text x="194.1" y="50" font-size="6.9" text-anchor="middle" fill="#1a1a1a" font-family="Liberation Sans">-14</text><text x="219.4" y="50" font-size="6.9" text-anchor="middle" fill="#1a1a1a" font-family="Liberation Sans">-12</text><text x="244.7" y="50" font-size="6.9" text-anchor="middle" fill="#1a1a1a" font-family="Liberation Sans">-10</text><text x="270.0" y="50" font-size="6.9" text-anchor="middle" fill="#1a1a1a" font-family="Liberation Sans">-8</text><text x="295.3" y="50" font-size="6.9" text-anchor="middle" fill="#1a1a1a" font-family="Liberation Sans">-6</text><text x="320.6" y="50" font-size="6.9" text-anchor="middle" fill="#1a1a1a" font-family="Liberation Sans">-4</text><text x="345.9" y="50" font-size="6.9" text-anchor="middle" fill="#1a1a1a" font-family="Liberation Sans">-2</text><text x="371.2" y="50" font-size="6.9" text-anchor="middle" fill="#1a1a1a" font-family="Liberation Sans">0</text><text x="396.5" y="50" font-size="6.9" text-anchor="middle" fill="#1a1a1a" font-family="Liberation Sans">2</text><text x="421.8" y="50" font-size="6.9" text-anchor="middle" fill="#1a1a1a" font-family="Liberation Sans">4</text><text x="447.1" y="50" font-size="6.9" text-anchor="middle" fill="#1a1a1a" font-family="Liberation Sans">6</text><text x="472.4" y="50" font-size="6.9" text-anchor="middle" fill="#1a1a1a" font-family="Liberation Sans">8</text><g clip-path="url(#vclip)"><text transform="translate(50,412.6) rotate(-90)" x="0" y="0" font-size="6.9" text-anchor="middle" fill="#1a1a1a" font-family="Liberation Sans">0</text><text transform="translate(50,387.3) rotate(-90)" x="0" y="0" font-size="6.9" text-anchor="middle" fill="#1a1a1a" font-family="Liberation Sans">2</text><text transform="translate(50,362.0) rotate(-90)" x="0" y="0" font-size="6.9" text-anchor="middle" fill="#1a1a1a" font-family="Liberation Sans">4</text><text transform="translate(50,336.7) rotate(-90)" x="0" y="0" font-size="6.9" text-anchor="middle" fill="#1a1a1a" font-family="Liberation Sans">6</text><text transform="translate(50,311.4) rotate(-90)" x="0" y="0" font-size="6.9" text-anchor="middle" fill="#1a1a1a" font-family="Liberation Sans">8</text><text transform="translate(50,286.1) rotate(-90)" x="0" y="0" font-size="6.9" text-anchor="middle" fill="#1a1a1a" font-family="Liberation Sans">10</text><text transform="translate(50,260.8) rotate(-90)" x="0" y="0" font-size="6.9" text-anchor="middle" fill="#1a1a1a" font-family="Liberation Sans">12</text><text transform="translate(50,235.5) rotate(-90)" x="0" y="0" font-size="6.9" text-anchor="middle" fill="#1a1a1a" font-family="Liberation Sans">14</text><text transform="translate(50,210.2) rotate(-90)" x="0" y="0" font-size="6.9" text-anchor="middle" fill="#1a1a1a" font-family="Liberation Sans">16</text><text transform="translate(50,184.9) rotate(-90)" x="0" y="0" font-size="6.9" text-anchor="middle" fill="#1a1a1a" font-family="Liberation Sans">18</text><text transform="translate(50,159.6) rotate(-90)" x="0" y="0" font-size="6.9" text-anchor="middle" fill="#1a1a1a" font-family="Liberation Sans">20</text><text transform="translate(50,134.3) rotate(-90)" x="0" y="0" font-size="6.9" text-anchor="middle" fill="#1a1a1a" font-family="Liberation Sans">22</text><text transform="translate(50,109.0) rotate(-90)" x="0" y="0" font-size="6.9" text-anchor="middle" fill="#1a1a1a" font-family="Liberation Sans">24</text><text transform="translate(50,83.7) rotate(-90)" x="0" y="0" font-size="6.9" text-anchor="middle" fill="#1a1a1a" font-family="Liberation Sans">26</text><text transform="translate(50,58.4) rotate(-90)" x="0" y="0" font-size="6.9" text-anchor="middle" fill="#1a1a1a" font-family="Liberation Sans">28</text></g><path d="M67 52v3h1v-3zM80 53.5v1.5h1v-1.5zM92 52v3h1v-3zM105 53.5v1.5h1v-1.5zM118 52v3h1v-3zM130 53.5v1.5h1v-1.5zM143 52v3h1v-3zM156 53.5v1.5h1v-1.5zM168 52v3h1v-3zM181 53.5v1.5h1v-1.5zM194 52v3h1v-3zM206 53.5v1.5h1v-1.5zM219 52v3h1v-3zM232 53.5v1.5h1v-1.5zM244 52v3h1v-3zM257 53.5v1.5h1v-1.5zM270 52v3h1v-3zM282 53.5v1.5h1v-1.5zM295 52v3h1v-3zM307 53.5v1.5h1v-1.5zM320 52v3h1v-3zM333 53.5v1.5h1v-1.5zM345 52v3h1v-3zM358 53.5v1.5h1v-1.5zM371 52v3h1v-3zM383 53.5v1.5h1v-1.5zM396 52v3h1v-3zM409 53.5v1.5h1v-1.5zM421 52v3h1v-3zM434 53.5v1.5h1v-1.5zM447 52v3h1v-3zM459 53.5v1.5h1v-1.5zM472 52v3h1v-3zM51.5 412h3.5v1h-3.5zM53.2 399h1.8v1h-1.8zM51.5 387h3.5v1h-3.5zM53.2 374h1.8v1h-1.8zM51.5 362h3.5v1h-3.5zM53.2 349h1.8v1h-1.8zM51.5 336h3.5v1h-3.5zM53.2 324h1.8v1h-1.8zM51.5 311h3.5v1h-3.5zM53.2 298h1.8v1h-1.8zM51.5 286h3.5v1h-3.5zM53.2 273h1.8v1h-1.8zM51.5 260h3.5v1h-3.5zM53.2 248h1.8v1h-1.8zM51.5 235h3.5v1h-3.5zM53.2 222h1.8v1h-1.8zM51.5 210h3.5v1h-3.5zM53.2 197h1.8v1h-1.8zM51.5 184h3.5v1h-3.5zM53.2 172h1.8v1h-1.8zM51.5 159h3.5v1h-3.5zM53.2 146h1.8v1h-1.8zM51.5 134h3.5v1h-3.5zM53.2 121h1.8v1h-1.8zM51.5 108h3.5v1h-3.5zM53.2 96h1.8v1h-1.8zM51.5 83h3.5v1h-3.5zM53.2 71h1.8v1h-1.8zM51.5 58h3.5v1h-3.5z" fill="#222"/><path d="M311 51.6h3.4l-1.7 2.2z M50.4 319.1v3.4l2.2-1.7z" fill="#111"/></svg>
<div class="a" style="left:43px;top:424.6px;width:446px;height:8.2px;background:#f6f6f6;border-bottom:1px solid #e6e6e6"></div>
<div class="a" style="left:43.3px;top:424.7px;width:11px;height:8px;background:#fff;border:1px solid #c8c8c8"></div>
<div class="a" style="left:54.4px;top:424.7px;width:8px;height:8px;background:linear-gradient(#fafafa,#e2e2e2);border:1px solid #b0b0b0"></div>
<svg class="a" style="left:55.5px;top:426px" width="6" height="6"><path d="M4.5 0.8V5.2L1.5 3z" fill="#000"/></svg>
<div class="a" style="left:198.4px;top:424.8px;width:182px;height:8px;border:1px solid #b9bdc4;border-radius:1px;background:linear-gradient(#f4f5f7,#d9dde3)"></div>
<div class="a" style="left:285px;top:426px;width:9px;height:6px;background:repeating-linear-gradient(90deg,#b4b8bf 0 1px,transparent 1px 2.5px)"></div>
<div class="a" style="left:442.5px;top:425px;width:8px;height:7.5px;background:linear-gradient(#fafafa,#e2e2e2);border:1px solid #b0b0b0"></div>
<div class="a" style="left:450px;top:425px;width:8px;height:7.5px;background:linear-gradient(#fafafa,#e2e2e2);border:1px solid #b0b0b0"></div>
<svg class="a" style="left:442.5px;top:425px" width="16" height="8"><path d="M5 1.8V5.8L2.5 3.8zM11 1.8V5.8L13.5 3.8z" fill="#000"/></svg>
<span class="t" style="left:469.5px;top:425.8px;font-size:6.5px">1 &lt;</span>
<div class="a" style="left:205px;top:433.8px;width:215px;height:2px;background:repeating-linear-gradient(90deg,#d6d6d6 0 1px,#f4f4f4 1px 2px)"></div>
<div class="a" style="left:481px;top:55px;width:8px;height:369.3px;background:#f6f6f6;border-left:1px solid #e4e4e4"></div>
<div class="a" style="left:481.3px;top:56px;width:7.5px;height:7.5px;background:linear-gradient(#fafafa,#e2e2e2);border:1px solid #b0b0b0"></div>
<svg class="a" style="left:481.3px;top:56px" width="8" height="8"><path d="M1.8 5H6L3.9 2.4z" fill="#000"/></svg>
<div class="a" style="left:481.3px;top:409.6px;width:7.5px;height:7px;background:linear-gradient(#fafafa,#e2e2e2);border:1px solid #b0b0b0"></div>
<div class="a" style="left:481.3px;top:416.6px;width:7.5px;height:7.7px;background:linear-gradient(#fafafa,#e2e2e2);border:1px solid #b0b0b0"></div>
<svg class="a" style="left:481.3px;top:409.6px" width="8" height="15"><path d="M1.8 4.6H6L3.9 2.2zM1.8 10.2H6L3.9 12.6z" fill="#000"/></svg>
<span class="t" style="left:482px;top:426px;font-size:6.5px">10</span>
<div class="a" style="left:481.4px;top:198.2px;width:7.3px;height:127px;border:1px solid #b5b9c0;border-radius:1px;background:linear-gradient(90deg,#f3f4f6,#d6dae0)"></div>
<div class="a" style="left:482.8px;top:258px;width:4.5px;height:7px;background:repeating-linear-gradient(#b4b8bf 0 0.8px,transparent 0.8px 2px)"></div>
<div class="a" style="left:489.6px;top:164px;width:1.6px;height:132px;background:repeating-linear-gradient(#d0d0d0 0 1px,transparent 1px 2px)"></div>
<div class="a" style="left:0;top:436px;width:620px;height:30px;background:#fff;border-left:1px solid #8a8a8a;border-right:1px solid #c8c8c8"></div>
<div class="a" style="left:0;top:436.6px;width:610px;height:29px;overflow:hidden">
<span class="t" style="left:3px;top:-0.5px;font-size:6.7px;color:#111">Format: R11/R12 DXF Drawing (Teigha) (*.dxf)</span>
<span class="t" style="left:3px;top:6.7px;font-size:6.7px;color:#2424b8"><i>Kommando:</i> layerhideall</span>
<span class="t" style="left:3px;top:14.2px;font-size:6.7px;color:#2424b8"><i>Kommando:</i> selectionmenu</span>
<span class="t" style="left:3px;top:21.8px;font-size:6.7px;color:#2424b8"><i>Kommando:</i> selectcontour</span>
</div>
<div class="a" style="left:610.5px;top:437px;width:8.5px;height:28.5px;background:#f4f4f4"></div>
<div class="a" style="left:610.3px;top:436px;width:10px;height:30px;background:#dcdcdc"></div>
<div class="a" style="left:610.5px;top:436.5px;width:8.5px;height:7.5px;background:linear-gradient(#fafafa,#e0e0e0);border:1px solid #b3b3b3"></div>
<svg class="a" style="left:610.5px;top:436.5px" width="9" height="7"><path d="M2 4.6H6.5L4.25 2z" fill="#000"/></svg>
<div class="a" style="left:610.5px;top:444px;width:8.5px;height:7px;background:linear-gradient(#fafafa,#e0e0e0);border:1px solid #b3b3b3"></div>
<div class="a" style="left:610.5px;top:451px;width:8.5px;height:7.3px;background:linear-gradient(#fafafa,#e0e0e0);border:1px solid #b3b3b3"></div>
<svg class="a" style="left:610.5px;top:451px" width="9" height="7"><path d="M2 4.6H6.5L4.25 2z" fill="#000"/></svg>
<div class="a" style="left:610.5px;top:458.3px;width:8.5px;height:7.5px;background:linear-gradient(#fafafa,#e0e0e0);border:1px solid #b3b3b3"></div>
<svg class="a" style="left:610.5px;top:458.3px" width="9" height="7"><path d="M2 2.4H6.5L4.25 5z" fill="#000"/></svg>
<div class="a" style="left:0;top:466px;width:620px;height:15px;background:#fff;border:1px solid #a8a8a8;border-top:1px solid #9a9a9a"></div>
<span class="t" style="left:1.3px;top:472.1px;font-size:6.7px;color:#111">Kommando:</span>
<div class="a" style="left:606px;top:468px;width:12.5px;height:12.5px;border:1px solid #b0b0b0;border-radius:2px;background:linear-gradient(#fbfbfb,#e2e2e2)"></div>
<div class="a" style="left:608.8px;top:472px;width:7px;height:5px;border:1px solid #444;border-top:1.6px solid #222;background:#fff"></div>
<div class="a" style="left:0;top:481px;width:640px;height:19px;background:#efefef"></div>
<div class="a" style="left:0px;top:481.5px;width:76.5px;height:18.5px;border:1px solid #bdbdbd;border-bottom:none;background:linear-gradient(#f0f0f0,#e4e4e4)"></div>
<div class="a" style="left:76.5px;top:481.5px;width:78px;height:18.5px;border:1px solid #bdbdbd;border-bottom:none;background:linear-gradient(#f0f0f0,#e4e4e4)"></div>
<div class="a" style="left:155.5px;top:481.5px;width:129.5px;height:18.5px;border:1px solid #bdbdbd;border-bottom:none;background:linear-gradient(#f0f0f0,#e4e4e4)"></div>
<div class="a" style="left:285.5px;top:481.5px;width:99.5px;height:18.5px;border:1px solid #bdbdbd;border-bottom:none;background:linear-gradient(#f0f0f0,#e4e4e4)"></div>
<span class="t" style="left:1px;top:483.9px;font-size:6.7px">-4.5953,7.2373</span>
<span class="t" style="left:2px;top:490.5px;font-size:6.7px">-</span>
<span class="t" style="left:79px;top:483.9px;font-size:6.7px">8.5729&lt;122.4136</span>
<span class="t" style="left:80px;top:490.5px;font-size:6.7px">-</span>
<span class="t" style="left:178px;top:483.7px;font-size:6.7px">Objekt der</span>
<span class="t" style="left:166.4px;top:490.3px;font-size:6.7px">Kontur wählen</span>
<span class="t" style="left:231.4px;top:487.2px;font-size:6.7px">Abbrechen</span>
<svg class="a" style="left:212px;top:482px" width="18" height="18"><g transform="rotate(-18 8.5 8.5)"><ellipse cx="8.5" cy="8.8" rx="5.4" ry="7.2" fill="#fff" stroke="#9a9a9a" stroke-width="0.8"/><path d="M8.5 1.8V6.5" stroke="#c8c8c8" stroke-width="0.6"/><ellipse cx="7.3" cy="5.2" rx="0.9" ry="1.1" fill="#3050d0"/></g></svg>
<div class="a" style="left:286.5px;top:482.5px;width:97.5px;height:17.5px;overflow:hidden">
<span class="t" style="left:0.5px;top:-2.7px;font-size:6.85px">Selektierte Objekte:</span>
<span class="t" style="left:0.5px;top:4.5px;font-size:6.85px">1 Linie auf Layer</span>
<span class="t" style="left:0.5px;top:11.7px;font-size:6.85px">'WEGEFLAECHEN'</span>
</div>
<div class="a" style="left:620px;top:31px;width:1px;height:390px;background:#d4d4d4"></div>
<svg class="a" style="left:0;top:0" width="640" height="500"><path d="M493.0 38.4l2.2-3M495.0 38.4l2.2-3M497.0 38.4l2.2-3M499.0 38.4l2.2-3M501.0 38.4l2.2-3M503.0 38.4l2.2-3M505.0 38.4l2.2-3M507.0 38.4l2.2-3M509.0 38.4l2.2-3M511.0 38.4l2.2-3M513.0 38.4l2.2-3M515.0 38.4l2.2-3M517.0 38.4l2.2-3M519.0 38.4l2.2-3M521.0 38.4l2.2-3M523.0 38.4l2.2-3M525.0 38.4l2.2-3M527.0 38.4l2.2-3M529.0 38.4l2.2-3" stroke="#c6c6c6" stroke-width="0.8"/></svg>
<svg class="a" style="left:0;top:0" width="640" height="500"><path d="M565.0 38.4l2.2-3M567.0 38.4l2.2-3M569.0 38.4l2.2-3M571.0 38.4l2.2-3M573.0 38.4l2.2-3M575.0 38.4l2.2-3M577.0 38.4l2.2-3M579.0 38.4l2.2-3M581.0 38.4l2.2-3M583.0 38.4l2.2-3M585.0 38.4l2.2-3M587.0 38.4l2.2-3M589.0 38.4l2.2-3M591.0 38.4l2.2-3M593.0 38.4l2.2-3M595.0 38.4l2.2-3M597.0 38.4l2.2-3M599.0 38.4l2.2-3M601.0 38.4l2.2-3" stroke="#c6c6c6" stroke-width="0.8"/></svg>
<span class="t" style="left:535.6px;top:33.599999999999994px;font-size:6.15px;color:#222;-webkit-text-stroke:0px">Layerliste</span>
<svg class="a" style="left:605px;top:33.0px" width="15" height="8"><rect x="0.5" y="0.5" width="7" height="7" rx="1.2" fill="#e4e4e4" stroke="#8a8a8a" stroke-width="0.8"/><rect x="2.4" y="2.6" width="3.4" height="3.2" fill="none" stroke="#222" stroke-width="0.9"/><path d="M3.4 2.6V1.8h3.2v3.2h-.8" fill="none" stroke="#222" stroke-width="0.6"/><rect x="8" y="0.5" width="6.5" height="7" rx="1.2" fill="#e4e4e4" stroke="#8a8a8a" stroke-width="0.8"/><path d="M9.5 2L13 5.8M13 2L9.5 5.8" stroke="#111" stroke-width="1.1"/></svg>
<div class="btn" style="left:492.5px;top:42.4px;width:24.5px;height:11.6px;border-radius:1.5px"></div>
<div class="btn" style="left:517px;top:42.4px;width:26px;height:11.6px;border-radius:1.5px"></div>
<div class="btn" style="left:543px;top:42.4px;width:25px;height:11.6px;border-radius:1.5px"></div>
<div class="btn" style="left:568px;top:42.4px;width:26px;height:11.6px;border-radius:1.5px"></div>
<div class="btn" style="left:594px;top:42.4px;width:25.200000000000045px;height:11.6px;border-radius:1.5px"></div>
<svg class="a" style="left:492px;top:42px" width="128" height="12"><path d="M9.3 6c1.2-1.8 2.4-2.6 3.6-2.6s2.4.8 3.6 2.6c-1.2 1.8-2.4 2.6-3.6 2.6S10.5 7.8 9.3 6z" fill="#111"/><circle cx="12.9" cy="6" r="0.9" fill="#888"/><path d="M35.5 6c1.2-1.7 2.3-2.4 3.5-2.4s2.3.7 3.5 2.4c-1.2 1.7-2.3 2.4-3.5 2.4S36.7 7.7 35.5 6z" fill="none" stroke="#9a9a9a" stroke-width="0.9"/><circle cx="39" cy="6" r="0.9" fill="#9a9a9a"/><path d="M63.5 3.2v5.6M60.7 6h5.6" stroke="#d01010" stroke-width="1.5"/><path d="M86.6 6.2h4.8" stroke="#555" stroke-width="1"/><path d="M109.5 9.5l1-2.6 4.5-4.5 1.6 1.6-4.5 4.5z" fill="#e8a040" stroke="#b06a10" stroke-width="0.5"/></svg>
<div class="a" style="left:492.5px;top:54.8px;width:127px;height:132px;background:#fff;border:1px solid #adadad"></div>
<span class="t" style="left:513.75px;top:57.20px;font-size:6.85px;color:#111;-webkit-text-stroke:0.1px #111;letter-spacing:0.1px;transform-origin:0 0;transform:scaleX(0.83)">EINLAEUFE</span>
<span class="t" style="left:513.75px;top:65.18px;font-size:6.85px;color:#111;-webkit-text-stroke:0.1px #111;letter-spacing:0.1px;transform-origin:0 0;transform:scaleX(0.83)">GPS-MESSUNGEN</span>
<span class="t" style="left:513.75px;top:73.16px;font-size:6.85px;color:#111;-webkit-text-stroke:0.1px #111;letter-spacing:0.1px;transform-origin:0 0;transform:scaleX(0.83)">HECKEN</span>
<span class="t" style="left:513.75px;top:81.14px;font-size:6.85px;color:#111;-webkit-text-stroke:0.1px #111;letter-spacing:0.1px;transform-origin:0 0;transform:scaleX(0.83)">KIESKANTE</span>
<span class="t" style="left:513.75px;top:89.12px;font-size:6.85px;color:#111;-webkit-text-stroke:0.1px #111;letter-spacing:0.1px;transform-origin:0 0;transform:scaleX(0.83)">PUNKT-BASIS</span>
<span class="t" style="left:513.75px;top:97.10px;font-size:6.85px;color:#111;-webkit-text-stroke:0.1px #111;letter-spacing:0.1px;transform-origin:0 0;transform:scaleX(0.83)">PUNKT - BESCHR</span>
<span class="t" style="left:513.75px;top:105.08px;font-size:6.85px;color:#111;-webkit-text-stroke:0.1px #111;letter-spacing:0.1px;transform-origin:0 0;transform:scaleX(0.83)">PUNKT_-_BESCHR</span>
<span class="t" style="left:513.75px;top:113.06px;font-size:6.85px;color:#111;-webkit-text-stroke:0.1px #111;letter-spacing:0.1px;transform-origin:0 0;transform:scaleX(0.83)">PUNKTE</span>
<span class="t" style="left:513.75px;top:121.04px;font-size:6.85px;color:#111;-webkit-text-stroke:0.1px #111;letter-spacing:0.1px;transform-origin:0 0;transform:scaleX(0.83)">PUNKT - KATEGORIE</span>
<span class="t" style="left:513.75px;top:129.02px;font-size:6.85px;color:#111;-webkit-text-stroke:0.1px #111;letter-spacing:0.1px;transform-origin:0 0;transform:scaleX(0.83)">PUNKT_-_KATEGORIE</span>
<span class="t" style="left:513.75px;top:137.00px;font-size:6.85px;color:#111;-webkit-text-stroke:0.1px #111;letter-spacing:0.1px;transform-origin:0 0;transform:scaleX(0.83)">PUNKT - NAME</span>
<span class="t" style="left:513.75px;top:144.98px;font-size:6.85px;color:#111;-webkit-text-stroke:0.1px #111;letter-spacing:0.1px;transform-origin:0 0;transform:scaleX(0.83)">PUNKT_-_NAME</span>
<span class="t" style="left:513.75px;top:152.96px;font-size:6.85px;color:#111;-webkit-text-stroke:0.1px #111;letter-spacing:0.1px;transform-origin:0 0;transform:scaleX(0.83)">RABATTEN</span>
<span class="t" style="left:513.75px;top:160.94px;font-size:6.85px;color:#111;-webkit-text-stroke:0.1px #111;letter-spacing:0.1px;transform-origin:0 0;transform:scaleX(0.83)">RASEN</span>
<span class="t" style="left:513.75px;top:168.92px;font-size:6.85px;color:#111;-webkit-text-stroke:0.1px #111;letter-spacing:0.1px;transform-origin:0 0;transform:scaleX(0.83)">STD_AUDIT_GENERATED_(254)</span>
<span class="t" style="left:513.75px;top:176.90px;font-size:6.85px;color:#111;-webkit-text-stroke:0.1px #111;letter-spacing:0.1px;transform-origin:0 0;transform:scaleX(0.83)">WEGEFLAECHEN</span>
<svg class="a" style="left:493px;top:55px" width="20" height="130"><path d="M2.2 4.60c1.2-1.8 2.2-2.4 3.3-2.4s2.1.6 3.3 2.4c-1.2 1.8-2.2 2.4-3.3 2.4S3.4 6.40 2.2 4.60z" fill="#fafafa" stroke="#9c9c9c" stroke-width="1.1"/><circle cx="5.5" cy="4.60" r="1.1" fill="#a4a4a4"/><rect x="11.6" y="3.40" width="4.8" height="4.4" rx="0.4" fill="#ababab"/><path d="M12.7 3.40v-1.4a1.3 1.3 0 0 1 2.6 0v1.4" fill="none" stroke="#ababab" stroke-width="0.9"/><path d="M2.2 12.58c1.2-1.8 2.2-2.4 3.3-2.4s2.1.6 3.3 2.4c-1.2 1.8-2.2 2.4-3.3 2.4S3.4 14.38 2.2 12.58z" fill="#fafafa" stroke="#9c9c9c" stroke-width="1.1"/><circle cx="5.5" cy="12.58" r="1.1" fill="#a4a4a4"/><rect x="11.6" y="11.38" width="4.8" height="4.4" rx="0.4" fill="#ababab"/><path d="M12.7 11.38v-1.4a1.3 1.3 0 0 1 2.6 0v1.4" fill="none" stroke="#ababab" stroke-width="0.9"/><path d="M2.2 20.56c1.2-1.8 2.2-2.4 3.3-2.4s2.1.6 3.3 2.4c-1.2 1.8-2.2 2.4-3.3 2.4S3.4 22.36 2.2 20.56z" fill="#fafafa" stroke="#9c9c9c" stroke-width="1.1"/><circle cx="5.5" cy="20.56" r="1.1" fill="#a4a4a4"/><rect x="11.6" y="19.36" width="4.8" height="4.4" rx="0.4" fill="#ababab"/><path d="M12.7 19.36v-1.4a1.3 1.3 0 0 1 2.6 0v1.4" fill="none" stroke="#ababab" stroke-width="0.9"/><path d="M2.2 28.54c1.2-1.8 2.2-2.4 3.3-2.4s2.1.6 3.3 2.4c-1.2 1.8-2.2 2.4-3.3 2.4S3.4 30.34 2.2 28.54z" fill="#fafafa" stroke="#9c9c9c" stroke-width="1.1"/><circle cx="5.5" cy="28.54" r="1.1" fill="#a4a4a4"/><rect x="11.6" y="27.34" width="4.8" height="4.4" rx="0.4" fill="#ababab"/><path d="M12.7 27.34v-1.4a1.3 1.3 0 0 1 2.6 0v1.4" fill="none" stroke="#ababab" stroke-width="0.9"/><path d="M2.2 36.52c1.2-1.8 2.2-2.4 3.3-2.4s2.1.6 3.3 2.4c-1.2 1.8-2.2 2.4-3.3 2.4S3.4 38.32 2.2 36.52z" fill="#fafafa" stroke="#9c9c9c" stroke-width="1.1"/><circle cx="5.5" cy="36.52" r="1.1" fill="#a4a4a4"/><rect x="11.6" y="35.32" width="4.8" height="4.4" rx="0.4" fill="#ababab"/><path d="M12.7 35.32v-1.4a1.3 1.3 0 0 1 2.6 0v1.4" fill="none" stroke="#ababab" stroke-width="0.9"/><path d="M2.2 44.50c1.2-1.8 2.2-2.4 3.3-2.4s2.1.6 3.3 2.4c-1.2 1.8-2.2 2.4-3.3 2.4S3.4 46.30 2.2 44.50z" fill="#fafafa" stroke="#9c9c9c" stroke-width="1.1"/><circle cx="5.5" cy="44.50" r="1.1" fill="#a4a4a4"/><rect x="11.6" y="43.30" width="4.8" height="4.4" rx="0.4" fill="#ababab"/><path d="M12.7 43.30v-1.4a1.3 1.3 0 0 1 2.6 0v1.4" fill="none" stroke="#ababab" stroke-width="0.9"/><path d="M2.2 52.48c1.2-1.8 2.2-2.4 3.3-2.4s2.1.6 3.3 2.4c-1.2 1.8-2.2 2.4-3.3 2.4S3.4 54.28 2.2 52.48z" fill="#fafafa" stroke="#9c9c9c" stroke-width="1.1"/><circle cx="5.5" cy="52.48" r="1.1" fill="#a4a4a4"/><rect x="11.6" y="51.28" width="4.8" height="4.4" rx="0.4" fill="#ababab"/><path d="M12.7 51.28v-1.4a1.3 1.3 0 0 1 2.6 0v1.4" fill="none" stroke="#ababab" stroke-width="0.9"/><path d="M2.2 60.46c1.2-1.8 2.2-2.4 3.3-2.4s2.1.6 3.3 2.4c-1.2 1.8-2.2 2.4-3.3 2.4S3.4 62.26 2.2 60.46z" fill="#fafafa" stroke="#9c9c9c" stroke-width="1.1"/><circle cx="5.5" cy="60.46" r="1.1" fill="#a4a4a4"/><rect x="11.6" y="59.26" width="4.8" height="4.4" rx="0.4" fill="#ababab"/><path d="M12.7 59.26v-1.4a1.3 1.3 0 0 1 2.6 0v1.4" fill="none" stroke="#ababab" stroke-width="0.9"/><path d="M2.2 68.44c1.2-1.8 2.2-2.4 3.3-2.4s2.1.6 3.3 2.4c-1.2 1.8-2.2 2.4-3.3 2.4S3.4 70.24 2.2 68.44z" fill="#fafafa" stroke="#9c9c9c" stroke-width="1.1"/><circle cx="5.5" cy="68.44" r="1.1" fill="#a4a4a4"/><rect x="11.6" y="67.24" width="4.8" height="4.4" rx="0.4" fill="#ababab"/><path d="M12.7 67.24v-1.4a1.3 1.3 0 0 1 2.6 0v1.4" fill="none" stroke="#ababab" stroke-width="0.9"/><path d="M2.2 76.42c1.2-1.8 2.2-2.4 3.3-2.4s2.1.6 3.3 2.4c-1.2 1.8-2.2 2.4-3.3 2.4S3.4 78.22 2.2 76.42z" fill="#fafafa" stroke="#9c9c9c" stroke-width="1.1"/><circle cx="5.5" cy="76.42" r="1.1" fill="#a4a4a4"/><rect x="11.6" y="75.22" width="4.8" height="4.4" rx="0.4" fill="#ababab"/><path d="M12.7 75.22v-1.4a1.3 1.3 0 0 1 2.6 0v1.4" fill="none" stroke="#ababab" stroke-width="0.9"/><path d="M2.2 84.40c1.2-1.8 2.2-2.4 3.3-2.4s2.1.6 3.3 2.4c-1.2 1.8-2.2 2.4-3.3 2.4S3.4 86.20 2.2 84.40z" fill="#fafafa" stroke="#9c9c9c" stroke-width="1.1"/><circle cx="5.5" cy="84.40" r="1.1" fill="#a4a4a4"/><rect x="11.6" y="83.20" width="4.8" height="4.4" rx="0.4" fill="#ababab"/><path d="M12.7 83.20v-1.4a1.3 1.3 0 0 1 2.6 0v1.4" fill="none" stroke="#ababab" stroke-width="0.9"/><path d="M2.2 92.38c1.2-1.8 2.2-2.4 3.3-2.4s2.1.6 3.3 2.4c-1.2 1.8-2.2 2.4-3.3 2.4S3.4 94.18 2.2 92.38z" fill="#fafafa" stroke="#9c9c9c" stroke-width="1.1"/><circle cx="5.5" cy="92.38" r="1.1" fill="#a4a4a4"/><rect x="11.6" y="91.18" width="4.8" height="4.4" rx="0.4" fill="#ababab"/><path d="M12.7 91.18v-1.4a1.3 1.3 0 0 1 2.6 0v1.4" fill="none" stroke="#ababab" stroke-width="0.9"/><path d="M2.2 100.36c1.2-1.8 2.2-2.4 3.3-2.4s2.1.6 3.3 2.4c-1.2 1.8-2.2 2.4-3.3 2.4S3.4 102.16 2.2 100.36z" fill="#fafafa" stroke="#9c9c9c" stroke-width="1.1"/><circle cx="5.5" cy="100.36" r="1.1" fill="#a4a4a4"/><rect x="11.6" y="99.16" width="4.8" height="4.4" rx="0.4" fill="#ababab"/><path d="M12.7 99.16v-1.4a1.3 1.3 0 0 1 2.6 0v1.4" fill="none" stroke="#ababab" stroke-width="0.9"/><path d="M2.2 108.34c1.2-1.8 2.2-2.4 3.3-2.4s2.1.6 3.3 2.4c-1.2 1.8-2.2 2.4-3.3 2.4S3.4 110.14 2.2 108.34z" fill="#fafafa" stroke="#9c9c9c" stroke-width="1.1"/><circle cx="5.5" cy="108.34" r="1.1" fill="#a4a4a4"/><rect x="11.6" y="107.14" width="4.8" height="4.4" rx="0.4" fill="#ababab"/><path d="M12.7 107.14v-1.4a1.3 1.3 0 0 1 2.6 0v1.4" fill="none" stroke="#ababab" stroke-width="0.9"/><path d="M2.2 116.32c1.2-1.8 2.2-2.4 3.3-2.4s2.1.6 3.3 2.4c-1.2 1.8-2.2 2.4-3.3 2.4S3.4 118.12 2.2 116.32z" fill="#fafafa" stroke="#9c9c9c" stroke-width="1.1"/><circle cx="5.5" cy="116.32" r="1.1" fill="#a4a4a4"/><rect x="11.6" y="115.12" width="4.8" height="4.4" rx="0.4" fill="#ababab"/><path d="M12.7 115.12v-1.4a1.3 1.3 0 0 1 2.6 0v1.4" fill="none" stroke="#ababab" stroke-width="0.9"/><path d="M1.8 124.30c1.3-2 2.5-2.7 3.7-2.7s2.4.7 3.7 2.7c-1.3 2-2.5 2.7-3.7 2.7S3.1 126.30 1.8 124.30z" fill="#111"/><circle cx="5.5" cy="124.30" r="0.9" fill="#aaa"/><rect x="11.6" y="123.10" width="4.8" height="4.4" rx="0.4" fill="#ababab"/><path d="M12.7 123.10v-1.4a1.3 1.3 0 0 1 2.6 0v1.4" fill="none" stroke="#ababab" stroke-width="0.9"/></svg>
<div class="a" style="left:610.8px;top:55.3px;width:8.4px;height:131px;background:#f2f2f2"></div>
<div class="a" style="left:610.8px;top:55.3px;width:8.4px;height:7.2px;background:linear-gradient(#fafafa,#e2e2e2);border:1px solid #b3b3b3"></div>
<svg class="a" style="left:610.8px;top:55.3px" width="9" height="8"><path d="M2.2 5H6.4L4.3 2.5z" fill="#000"/></svg>
<div class="a" style="left:611.3px;top:62.5px;width:7.5px;height:108px;border:1px solid #b9bdc4;border-radius:1px;background:linear-gradient(90deg,#f2f3f5,#dcdfe4)"></div>
<div class="a" style="left:612.8px;top:112px;width:4.5px;height:7px;background:repeating-linear-gradient(#b9bdc4 0 0.8px,transparent 0.8px 2px)"></div>
<div class="a" style="left:610.8px;top:170.5px;width:8.4px;height:7.6px;background:linear-gradient(#fafafa,#e2e2e2);border:1px solid #b3b3b3"></div>
<svg class="a" style="left:610.8px;top:170.5px" width="9" height="8"><path d="M2.2 5H6.4L4.3 2.5z" fill="#000"/></svg>
<div class="a" style="left:610.8px;top:178px;width:8.4px;height:7.8px;background:linear-gradient(#fafafa,#e2e2e2);border:1px solid #b3b3b3"></div>
<svg class="a" style="left:610.8px;top:178px" width="9" height="8"><path d="M2.2 2.8H6.4L4.3 5.3z" fill="#000"/></svg>
<svg class="a" style="left:0;top:0" width="640" height="500"><path d="M493.0 196.5l2.2-3M495.0 196.5l2.2-3M497.0 196.5l2.2-3M499.0 196.5l2.2-3M501.0 196.5l2.2-3M503.0 196.5l2.2-3M505.0 196.5l2.2-3M507.0 196.5l2.2-3M509.0 196.5l2.2-3M511.0 196.5l2.2-3M513.0 196.5l2.2-3M515.0 196.5l2.2-3" stroke="#c6c6c6" stroke-width="0.8"/></svg>
<svg class="a" style="left:0;top:0" width="640" height="500"><path d="M578.0 196.5l2.2-3M580.0 196.5l2.2-3M582.0 196.5l2.2-3M584.0 196.5l2.2-3M586.0 196.5l2.2-3M588.0 196.5l2.2-3M590.0 196.5l2.2-3M592.0 196.5l2.2-3M594.0 196.5l2.2-3M596.0 196.5l2.2-3M598.0 196.5l2.2-3M600.0 196.5l2.2-3M602.0 196.5l2.2-3" stroke="#c6c6c6" stroke-width="0.8"/></svg>
<span class="t" style="left:521px;top:191.70000000000002px;font-size:5.95px;color:#222;-webkit-text-stroke:0px">Eigenschaften Editor</span>
<svg class="a" style="left:605px;top:191.1px" width="15" height="8"><rect x="0.5" y="0.5" width="7" height="7" rx="1.2" fill="#e4e4e4" stroke="#8a8a8a" stroke-width="0.8"/><rect x="2.4" y="2.6" width="3.4" height="3.2" fill="none" stroke="#222" stroke-width="0.9"/><path d="M3.4 2.6V1.8h3.2v3.2h-.8" fill="none" stroke="#222" stroke-width="0.6"/><rect x="8" y="0.5" width="6.5" height="7" rx="1.2" fill="#e4e4e4" stroke="#8a8a8a" stroke-width="0.8"/><path d="M9.5 2L13 5.8M13 2L9.5 5.8" stroke="#111" stroke-width="1.1"/></svg>
<div class="a" style="left:492px;top:200.2px;width:127.5px;height:73.6px;border:1px solid #c2c2c2;background:#efefef"></div>
<span class="t" style="left:497.7px;top:208.1px;font-size:6.7px">Auswahl:</span>
<div class="a" style="left:527px;top:205.5px;width:79.29999999999995px;height:10.0px;border:1px solid #b4b4b4;border-radius:2px;background:linear-gradient(#f7f7f7,#dcdcdc)"></div>
<div class="a" style="left:599.5px;top:206.0px;width:1px;height:9.0px;background:#c2c2c2"></div>
<svg class="a" style="left:599.90px;top:207.50px" width="6" height="6"><path d="M1.2 2.1H4.8L3 4.2z" fill="#111"/></svg>
<span class="t" style="left:530px;top:208.1px;font-size:6.7px">Linie (1)</span>
<div class="a" style="left:497.7px;top:226px;width:108.6px;height:50px;border:1px solid #c4c4c4;border-radius:2px"></div>
<span class="t" style="left:501px;top:222.8px;font-size:6.7px;background:#efefef;padding:0 1px">Allgemein</span>
<span class="t" style="left:520.5px;top:236px;font-size:6.7px;width:21px;text-align:right">Layer:</span>
<div class="a" style="left:544.4px;top:232.9px;width:42.10000000000002px;height:9.900000000000006px;border:1px solid #b4b4b4;border-radius:2px;background:linear-gradient(#f7f7f7,#dcdcdc)"></div>
<div class="a" style="left:578.3px;top:233.4px;width:1px;height:8.900000000000006px;background:#c2c2c2"></div>
<svg class="a" style="left:579.40px;top:234.85px" width="6" height="6"><path d="M1.2 2.1H4.8L3 4.2z" fill="#111"/></svg>
<span class="t" style="left:547.1px;top:236px;font-size:6.6px;color:#111;-webkit-text-stroke:0.3px #111;transform-origin:0 0;transform:scaleX(0.88)">WEGEFLA</span>
<svg class="a" style="left:592.8px;top:235px" width="6" height="6"><path d="M3 0.7V5.3M0.7 3H5.3" stroke="#d41c1c" stroke-width="1.3"/></svg>
<span class="t" style="left:520.5px;top:247.1px;font-size:6.7px;width:21px;text-align:right">Farbe:</span>
<span class="t" style="left:502.2px;top:259.6px;font-size:6.7px">Linienstärke:</span>
<span class="t" style="left:510px;top:270.5px;font-size:6.7px;color:#555">Linientyp:</span>
<div class="a" style="left:544.4px;top:244.4px;width:55.80000000000007px;height:10.199999999999989px;border:1px solid #b4b4b4;border-radius:2px;background:linear-gradient(#f7f7f7,#dcdcdc)"></div>
<div class="a" style="left:592.3px;top:244.9px;width:1px;height:9.199999999999989px;background:#c2c2c2"></div>
<svg class="a" style="left:593.25px;top:246.50px" width="6" height="6"><path d="M1.2 2.1H4.8L3 4.2z" fill="#111"/></svg>
<span class="t" style="left:565px;top:247.6px;font-size:6.5px;width:26.5px;overflow:hidden">Von Layer</span>
<div class="a" style="left:544.4px;top:257px;width:55.80000000000007px;height:10.199999999999989px;border:1px solid #b4b4b4;border-radius:2px;background:linear-gradient(#f7f7f7,#dcdcdc)"></div>
<div class="a" style="left:592.3px;top:257.5px;width:1px;height:9.199999999999989px;background:#c2c2c2"></div>
<svg class="a" style="left:593.25px;top:259.10px" width="6" height="6"><path d="M1.2 2.1H4.8L3 4.2z" fill="#111"/></svg>
<span class="t" style="left:565px;top:260.2px;font-size:6.5px;width:26.5px;overflow:hidden">Von Layer</span>
<div class="a" style="left:544.4px;top:269.2px;width:55.80000000000007px;height:10.199999999999989px;border:1px solid #b4b4b4;border-radius:2px;background:linear-gradient(#f7f7f7,#dcdcdc)"></div>
<div class="a" style="left:592.3px;top:269.7px;width:1px;height:9.199999999999989px;background:#c2c2c2"></div>
<svg class="a" style="left:593.25px;top:271.30px" width="6" height="6"><path d="M1.2 2.1H4.8L3 4.2z" fill="#111"/></svg>
<span class="t" style="left:565px;top:272.4px;font-size:6.5px;width:26.5px;overflow:hidden">Von Layer</span>
<div class="a" style="left:547.1px;top:247.1px;width:16.4px;height:5.5px;border:1px solid #444;border-radius:1.5px;background:#fff"></div>
<div class="a" style="left:547px;top:261.6px;width:16.5px;height:0.9px;background:#444"></div>
<div class="a" style="left:492px;top:274px;width:128px;height:6px;background:#efefef"></div>
<div class="a" style="left:492px;top:273.6px;width:127.5px;height:1px;background:#c2c2c2"></div>
<div class="a" style="left:611px;top:201.5px;width:7.6px;height:71px;background:#f2f2f2"></div>
<div class="a" style="left:611px;top:201.5px;width:7.6px;height:6.3px;background:linear-gradient(#fafafa,#e2e2e2);border:1px solid #b3b3b3"></div>
<svg class="a" style="left:611px;top:201.8px" width="8" height="7"><path d="M2 4.3H5.8L3.9 2z" fill="#000"/></svg>
<div class="a" style="left:611px;top:257px;width:7.6px;height:7.7px;background:linear-gradient(#fafafa,#e2e2e2);border:1px solid #b3b3b3"></div>
<svg class="a" style="left:611px;top:257.3px" width="8" height="7"><path d="M2 4.3H5.8L3.9 2z" fill="#000"/></svg>
<div class="a" style="left:611px;top:264.7px;width:7.6px;height:7.7px;background:linear-gradient(#fafafa,#e2e2e2);border:1px solid #b3b3b3"></div>
<svg class="a" style="left:611px;top:265.0px" width="8" height="7"><path d="M2 2.6H5.8L3.9 4.9z" fill="#000"/></svg>
<div class="a" style="left:611.4px;top:209.5px;width:7px;height:14.4px;border:1px solid #b9bdc4;background:linear-gradient(90deg,#f2f3f5,#dcdfe4)"></div>
<div class="a" style="left:612.8px;top:213px;width:4.2px;height:7px;background:repeating-linear-gradient(#b9bdc4 0 0.8px,transparent 0.8px 2px)"></div>
<svg class="a" style="left:0;top:0" width="640" height="500"><path d="M493.0 283.8l2.2-3M495.0 283.8l2.2-3M497.0 283.8l2.2-3M499.0 283.8l2.2-3M501.0 283.8l2.2-3M503.0 283.8l2.2-3M505.0 283.8l2.2-3M507.0 283.8l2.2-3M509.0 283.8l2.2-3M511.0 283.8l2.2-3M513.0 283.8l2.2-3M515.0 283.8l2.2-3M517.0 283.8l2.2-3M519.0 283.8l2.2-3M521.0 283.8l2.2-3M523.0 283.8l2.2-3M525.0 283.8l2.2-3M527.0 283.8l2.2-3M529.0 283.8l2.2-3M531.0 283.8l2.2-3M533.0 283.8l2.2-3M535.0 283.8l2.2-3" stroke="#c6c6c6" stroke-width="0.8"/></svg>
<svg class="a" style="left:0;top:0" width="640" height="500"><path d="M574.0 283.8l2.2-3M576.0 283.8l2.2-3M578.0 283.8l2.2-3M580.0 283.8l2.2-3M582.0 283.8l2.2-3M584.0 283.8l2.2-3M586.0 283.8l2.2-3M588.0 283.8l2.2-3M590.0 283.8l2.2-3M592.0 283.8l2.2-3M594.0 283.8l2.2-3M596.0 283.8l2.2-3M598.0 283.8l2.2-3M600.0 283.8l2.2-3M602.0 283.8l2.2-3M604.0 283.8l2.2-3M606.0 283.8l2.2-3M608.0 283.8l2.2-3M610.0 283.8l2.2-3M612.0 283.8l2.2-3M614.0 283.8l2.2-3" stroke="#c6c6c6" stroke-width="0.8"/></svg>
<span class="t" style="left:541.5px;top:279.0px;font-size:5.85px;color:#222;-webkit-text-stroke:0px">Testversion</span>
<span class="t" style="left:496px;top:292.9px;font-size:6.7px">Die folgenden Add-Ons sind als</span>
<span class="t" style="left:496px;top:300.5px;font-size:6.7px">Testversionen installiert:</span>
<span class="t" style="left:497.75px;top:309.65px;font-size:6.9px;font-weight:bold">CAM</span>
<div class="a" style="left:535px;top:308px;width:18.75px;height:8.3px;border-radius:2px;background:#7cba2c;border:0.6px solid #6aa520"></div>
<span class="t" style="left:537.2px;top:310px;font-size:5.9px;color:#fff">Aktiv</span>
<div class="a" style="left:561.9px;top:308px;width:14.350000000000023px;height:8.3px;border-radius:2px;background:#ededed;border:1px solid #dedede"></div>
<span class="t" style="left:564.2px;top:310px;font-size:5.9px;color:#777">Info</span>
<div class="a" style="left:579.4px;top:308px;width:23.100000000000023px;height:8.3px;border-radius:2px;background:#ededed;border:1px solid #dedede"></div>
<span class="t" style="left:581.8px;top:310px;font-size:5.9px;color:#777">Kaufen</span>
<div class="a" style="left:605.6px;top:308px;width:7.5px;height:8.3px;border-radius:2px;background:#ededed;border:1px solid #dedede"></div>
<span class="t" style="left:607.6px;top:310px;font-size:5.9px;color:#777">X</span>
<span class="t" style="left:497.75px;top:319.9px;font-size:6.9px;font-weight:bold">DWG</span>
<div class="a" style="left:535px;top:318.5px;width:18.75px;height:8.3px;border-radius:2px;background:#7cba2c;border:0.6px solid #6aa520"></div>
<span class="t" style="left:537.2px;top:320.5px;font-size:5.9px;color:#fff">Aktiv</span>
<div class="a" style="left:561.9px;top:318.5px;width:14.350000000000023px;height:8.3px;border-radius:2px;background:#ededed;border:1px solid #dedede"></div>
<span class="t" style="left:564.2px;top:320.5px;font-size:5.9px;color:#777">Info</span>
<div class="a" style="left:579.4px;top:318.5px;width:23.100000000000023px;height:8.3px;border-radius:2px;background:#ededed;border:1px solid #dedede"></div>
<span class="t" style="left:581.8px;top:320.5px;font-size:5.9px;color:#777">Kaufen</span>
<div class="a" style="left:605.6px;top:318.5px;width:7.5px;height:8.3px;border-radius:2px;background:#ededed;border:1px solid #dedede"></div>
<span class="t" style="left:607.6px;top:320.5px;font-size:5.9px;color:#777">X</span>
<div class="a" style="left:535px;top:331.9px;width:18.75px;height:8.3px;border-radius:2px;background:#7cba2c;border:0.6px solid #6aa520"></div>
<span class="t" style="left:537.2px;top:333.9px;font-size:5.9px;color:#fff">Aktiv</span>
<div class="a" style="left:561.9px;top:331.9px;width:14.350000000000023px;height:8.3px;border-radius:2px;background:#ededed;border:1px solid #dedede"></div>
<span class="t" style="left:564.2px;top:333.9px;font-size:5.9px;color:#777">Info</span>
<div class="a" style="left:579.4px;top:331.9px;width:23.100000000000023px;height:8.3px;border-radius:2px;background:#ededed;border:1px solid #dedede"></div>
<span class="t" style="left:581.8px;top:333.9px;font-size:5.9px;color:#777">Kaufen</span>
<div class="a" style="left:605.6px;top:331.9px;width:7.5px;height:8.3px;border-radius:2px;background:#ededed;border:1px solid #dedede"></div>
<span class="t" style="left:607.6px;top:333.9px;font-size:5.9px;color:#777">X</span>
<span class="t" style="left:497.75px;top:330.3px;font-size:6.9px;font-weight:bold">Pro</span>
<span class="t" style="left:497.75px;top:337.8px;font-size:6.9px;font-weight:bold">Tools</span>
<span class="t" style="left:496.25px;top:347.4px;font-size:6.7px">Wenn Sie eines dieser Add-Ons</span>
<span class="t" style="left:496.25px;top:354.9px;font-size:6.7px">produktiv einsetzen möchten,</span>
<span class="t" style="left:496.25px;top:362.4px;font-size:6.7px">erwerben Sie bitte die Vollversion von</span>
<span class="t" style="left:496.25px;top:369.9px;font-size:6.7px">unserem <span style="color:#2b2bd6">Online Shop</span>.</span>
<span class="t" style="left:496.25px;top:384.9px;font-size:6.7px">Mit Ihrem Kauf unterstützen Sie die</span>
<span class="t" style="left:496.25px;top:392.4px;font-size:6.7px">weitere Entwicklung von QCAD.</span>
<span class="t" style="left:496.25px;top:407.15px;font-size:6.7px">Danke, dass Sie QCAD verwenden!</span>
<svg class="a" style="left:0;top:0" width="44" height="162"><rect x="1.6" y="52.1" width="17.4" height="18" rx="1.6" fill="#f1f1f1" stroke="#a9a9a9" stroke-width="1.2"/><path d="M4.8 55h10.700000000000001a0.8 0.8 0 0 1 .8 .8v8.6a0.8 0.8 0 0 1-.8.8h-8.00v-1.80h-2.70a0.8 0.8 0 0 1-.8-.8v-6.80a0.8 0.8 0 0 1 .8-.8z" fill="none" stroke="#333" stroke-width="1.05"/><circle cx="7.50" cy="59.00" r="2.00" fill="none" stroke="#333" stroke-width="1.05"/><path d="M10.10 63.00l3.10-4.00v4.00z" fill="none" stroke="#333" stroke-width="1.05"/><path d="M11.60 63.00l1.60-2.00v2.00z" fill="#333"/><rect x="21.3" y="52.1" width="17.4" height="18" rx="1.6" fill="#f1f1f1" stroke="#a9a9a9" stroke-width="1.2"/><path d="M24.6 55h10.700000000000001a0.8 0.8 0 0 1 .8 .8v8.6a0.8 0.8 0 0 1-.8.8h-8.00v-1.80h-2.70a0.8 0.8 0 0 1-.8-.8v-6.80a0.8 0.8 0 0 1 .8-.8z" fill="none" stroke="#e63232" stroke-width="1.05"/><circle cx="27.30" cy="59.00" r="2.00" fill="none" stroke="#e63232" stroke-width="1.05"/><path d="M29.90 63.00l3.10-4.00v4.00z" fill="none" stroke="#e63232" stroke-width="1.05"/><path d="M31.40 63.00l1.60-2.00v2.00z" fill="#e63232"/><rect x="1.6" y="71.89999999999999" width="17.4" height="18" rx="1.6" fill="#f1f1f1" stroke="#a9a9a9" stroke-width="1.2"/><rect x="3.6" y="74.5" width="12.8" height="12.8" fill="none" stroke="#555" stroke-width="1"/><path d="M7.1 76.8h6.764000000000001a0.8 0.8 0 0 1 .8 .8v5.336a0.8 0.8 0 0 1-.8.8h-5.18v-1.22h-1.58a0.8 0.8 0 0 1-.8-.8v-4.11a0.8 0.8 0 0 1 .8-.8z" fill="none" stroke="#f28c8c" stroke-width="0.8"/><circle cx="8.68" cy="79.52" r="1.36" fill="none" stroke="#f28c8c" stroke-width="0.8"/><path d="M10.45 82.24l2.11-2.72v2.72z" fill="none" stroke="#f28c8c" stroke-width="0.8"/><path d="M11.47 82.24l1.09-1.36v1.36z" fill="#f28c8c"/><rect x="21.3" y="71.89999999999999" width="17.4" height="18" rx="1.6" fill="#f1f1f1" stroke="#a9a9a9" stroke-width="1.2"/><path d="M25.1 76h10.085a0.8 0.8 0 0 1 .8 .8v8.09a0.8 0.8 0 0 1-.8.8h-7.56v-1.71h-2.52a0.8 0.8 0 0 1-.8-.8v-6.38a0.8 0.8 0 0 1 .8-.8z" fill="none" stroke="#444" stroke-width="1.05"/><circle cx="27.62" cy="79.80" r="1.90" fill="none" stroke="#444" stroke-width="1.05"/><path d="M30.09 83.60l2.94-3.80v3.80z" fill="none" stroke="#444" stroke-width="1.05"/><path d="M31.52 83.60l1.52-1.90v1.90z" fill="#444"/><path d="M29.5 74.6h6.2v9.6" fill="none" stroke="#e63232" stroke-width="1"/><path d="M23.4 74.4l12.4 10.8" stroke="#8a94a6" stroke-width="0.7"/><path d="M26 85.6h10" stroke="#8a94a6" stroke-width="0.9"/><rect x="1.6" y="96.0" width="17.4" height="18" rx="1.6" fill="#f1f1f1" stroke="#a9a9a9" stroke-width="1.2"/><rect x="4.2" y="99" width="12" height="10.5" fill="#b9c0e4" stroke="#8e94b0" stroke-width="0.6"/><circle cx="8" cy="102.4" r="1.7" fill="none" stroke="#e63232" stroke-width="0.9"/><path d="M9.6 107.6l4.4-3.2v3.2z" fill="none" stroke="#e63232" stroke-width="0.9"/><rect x="21.3" y="96.0" width="17.4" height="18" rx="1.6" fill="#f1f1f1" stroke="#a9a9a9" stroke-width="1.2"/><path d="M23.6 100.8l6.2-3.8 5.2 3.6 1.6 6.4-5.8 3-6-1.6z" fill="#b6bcdf" stroke="#8e94b0" stroke-width="0.6"/><circle cx="34.6" cy="99" r="1.8" fill="#fff" stroke="#555" stroke-width="0.7"/><circle cx="28" cy="102.6" r="1.7" fill="none" stroke="#e63232" stroke-width="0.9"/><path d="M30 108.2l4.4-3.3v3.3z" fill="none" stroke="#e63232" stroke-width="0.9"/><rect x="1.6" y="119.8" width="17.4" height="18" rx="1.6" fill="#c6c6c6" stroke="#a0a0a0" stroke-width="1.2"/><path d="M4.8 123.3h10.700000000000001a0.8 0.8 0 0 1 .8 .8v8.6a0.8 0.8 0 0 1-.8.8h-8.00v-1.80h-2.70a0.8 0.8 0 0 1-.8-.8v-6.80a0.8 0.8 0 0 1 .8-.8z" fill="none" stroke="#e63232" stroke-width="1.05"/><circle cx="7.50" cy="127.30" r="2.00" fill="none" stroke="#333" stroke-width="1.05"/><path d="M10.10 131.30l3.10-4.00v4.00z" fill="none" stroke="#333" stroke-width="1.05"/><path d="M11.60 131.30l1.60-2.00v2.00z" fill="#333"/><rect x="21.3" y="119.8" width="17.4" height="18" rx="1.6" fill="#f1f1f1" stroke="#a9a9a9" stroke-width="1.2"/><path d="M24.6 123.3h10.700000000000001a0.8 0.8 0 0 1 .8 .8v8.6a0.8 0.8 0 0 1-.8.8h-8.00v-1.80h-2.70a0.8 0.8 0 0 1-.8-.8v-6.80a0.8 0.8 0 0 1 .8-.8z" fill="none" stroke="#333" stroke-width="1.05"/><circle cx="27.30" cy="127.30" r="2.00" fill="none" stroke="#333" stroke-width="1.05"/><path d="M29.90 131.30l3.10-4.00v4.00z" fill="none" stroke="#333" stroke-width="1.05"/><path d="M31.40 131.30l1.60-2.00v2.00z" fill="#333"/><path d="M30.2 124.8h6v8.8h-6" fill="none" stroke="#e63232" stroke-width="1"/><path d="M31.8 122.4v13.4" stroke="#e63232" stroke-width="1"/><rect x="1.6" y="140.0" width="17.4" height="18" rx="1.6" fill="#f1f1f1" stroke="#a9a9a9" stroke-width="1.2"/><path d="M4.2 145.2l3.2-2.2v12.2l-3.2 2.2z" fill="#666" stroke="#333" stroke-width="0.5"/><path d="M7.4 143l7.4-2.6v12.2l-7.4 2.6z" fill="#fff" stroke="#333" stroke-width="0.9"/><path d="M9 152.4l4.6-6.2v6.2z" fill="none" stroke="#e63232" stroke-width="0.9"/></svg>
<svg class="a" style="left:620px;top:30px" width="20" height="140"><g stroke="#cacaca" stroke-width="0.7"><path d="M5.0 7.2l1.6-2"/><path d="M6.7 7.2l1.6-2"/><path d="M8.4 7.2l1.6-2"/><path d="M10.1 7.2l1.6-2"/><path d="M11.8 7.2l1.6-2"/><path d="M13.5 7.2l1.6-2"/><path d="M15.2 7.2l1.6-2"/><path d="M16.9 7.2l1.6-2"/><path d="M18.6 7.2l1.6-2"/></g><rect x="2.3" y="8.8" width="16" height="15" rx="2" fill="#c7c7c7" stroke="#9a9a9a" stroke-width="1"/><rect x="5.5" y="11.4" width="9" height="9.8" fill="#fff" stroke="#ddd" stroke-width="0.4"/><rect x="6.6" y="11.8" width="8" height="1.2" fill="#111"/><path d="M8 19.5l3-4.5 2 1.5-3 4.5z" fill="#e05050"/><path d="M8.5 19.5l2.4-3.6" stroke="#3060c0" stroke-width="1"/><rect x="5.5" y="28.1" width="9" height="9" rx="1" fill="#fff" stroke="#c9c9c9" stroke-width="0.7"/><rect x="6.6" y="29.0" width="8" height="1.2" fill="#111"/><circle cx="9.5" cy="33.5" r="1.6" fill="#e0b070" stroke="#a07030" stroke-width="0.5"/><circle cx="11.3" cy="35" r="1.6" fill="#f0c080" stroke="#a07030" stroke-width="0.5"/><rect x="5.5" y="45.1" width="9" height="9.5" rx="1" fill="#fff" stroke="#c9c9c9" stroke-width="0.7"/><rect x="6.6" y="46.0" width="8" height="1.2" fill="#111"/><rect x="7.5" y="49" width="5.5" height="4.5" fill="none" stroke="#d6e0ee" stroke-width="0.6"/><rect x="2.3" y="61.5" width="16" height="15.2" rx="2" fill="#c7c7c7" stroke="#9a9a9a" stroke-width="1"/><rect x="5.5" y="64.1" width="9" height="10.0" fill="#fff" stroke="#ddd" stroke-width="0.4"/><rect x="6.6" y="64.5" width="8" height="1.2" fill="#111"/><path d="M8 67.6h5M8 70.4h5M8 73.2h5" stroke="#666" stroke-width="0.7"/><rect x="5.5" y="80.1" width="9" height="9.5" rx="1" fill="#fff" stroke="#c9c9c9" stroke-width="0.7"/><rect x="6.6" y="81.0" width="8" height="1.2" fill="#111"/><path d="M7.5 86.5h5" stroke="#bbb" stroke-width="0.7"/><path d="M8 85v3M11 85v3" stroke="#d04040" stroke-width="0.6"/><rect x="5.5" y="96.9" width="9" height="9.5" rx="1" fill="#fff" stroke="#c9c9c9" stroke-width="0.7"/><rect x="6.6" y="97.80000000000001" width="8" height="1.2" fill="#111"/><rect x="8" y="100" width="4.6" height="5.6" fill="#f0d0a0" stroke="#c07a30" stroke-width="0.6"/><rect x="2.3" y="111.3" width="16" height="18" rx="2" fill="#c7c7c7" stroke="#9a9a9a" stroke-width="1"/><rect x="5.5" y="113.89999999999999" width="9" height="12.8" fill="#fff" stroke="#ddd" stroke-width="0.4"/><rect x="6.6" y="114.3" width="8" height="1.2" fill="#111"/><path d="M7.5 117.5h3M7.5 120h5M7.5 122.5h5" stroke="#aaa" stroke-width="0.6"/></svg>
</body></html>
